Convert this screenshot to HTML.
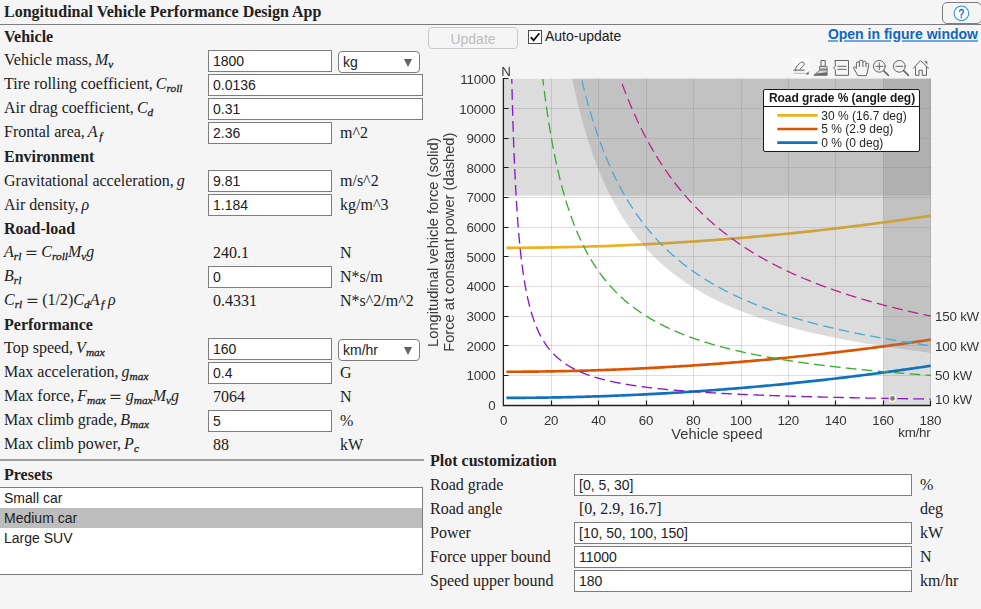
<!DOCTYPE html>
<html lang="en"><head><meta charset="utf-8"><title>Longitudinal Vehicle Performance Design App</title>
<style>
html,body{margin:0;padding:0}
body{width:981px;height:609px;background:#f5f5f5;position:relative;overflow:hidden;font-family:"Liberation Serif",serif;font-size:16px;color:#212121}
.abs,.sec,.lbl,.inp,.val,.unit,.sel{position:absolute;white-space:nowrap;box-sizing:border-box}
.sec,.lbl,.val,.unit{height:24px;line-height:24px}
.sec{font-weight:bold}
.inp{height:22px;border:1px solid #7d7d7d;background:#fff;padding:0 0 0 4px;font:14px/20px "Liberation Sans",sans-serif;color:#212121}
.sel{left:338px;width:82px;height:22px;border:1px solid #7d7d7d;border-radius:4px;background:#fff;padding:0 0 0 4px;font:14px/20px "Liberation Sans",sans-serif}
.arr{position:absolute;right:7px;top:7px;width:0;height:0;border-left:4.5px solid transparent;border-right:4.5px solid transparent;border-top:8px solid #616161}
i.m{font-style:italic}
i.m sub{font-size:11.3px;-webkit-text-stroke:0.3px #212121;vertical-align:baseline;position:relative;top:3px;line-height:0}
.eq{display:inline-block;transform:scaleX(1.25);margin:0 1.5px;position:relative;top:2px;-webkit-text-stroke:0.3px #212121}
.hdr{left:0;top:0;width:981px;height:25px;border-bottom:1px solid #7d7d7d;line-height:24px}
.title{left:4px;top:0;height:24px;line-height:24px;font-weight:bold}
.help{left:942px;top:2px;width:40px;height:22px;border:1px solid #7d7d7d;border-radius:5px;background:#f5f5f5}
.btn{left:428px;top:27px;width:90px;height:22px;border:1px solid #c9c9c9;border-radius:4px;background:#f5f5f5;color:#bdbdbd;font:14px/22px "Liberation Sans",sans-serif;text-align:center}
.cb{left:528px;top:30px;width:14px;height:14px;border:1px solid #4d4d4d;background:#fff}
.cbl{left:545px;top:25px;height:22px;line-height:22px;font:14px/22px "Liberation Sans",sans-serif;color:#212121}
.link{right:3px;top:23px;font:bold 14px/22px "Liberation Sans",sans-serif;color:#1265c0;text-decoration:underline;text-decoration-color:#6ea8de;text-underline-offset:1px;text-decoration-thickness:2px}
.hr{left:0;top:459px;width:424px;height:2px;background:#9e9e9e}
.list{left:-1px;top:487px;width:424px;height:88px;border:1px solid #7d7d7d;background:#fff;font:14px/20px "Liberation Sans",sans-serif}
.list div{height:20px;padding-left:4px}
.list .on{background:#bdbdbd}
svg.plot{position:absolute;left:424px;top:52px;will-change:transform}
</style></head><body>
<div class="abs hdr"></div>
<div class="abs title">Longitudinal Vehicle Performance Design App</div>
<div class="abs help"><svg width="38" height="20" viewBox="0 0 38 20" style="position:absolute;left:0;top:0"><circle cx="18.4" cy="10.3" r="7.3" fill="#fff" stroke="#2f8fe8" stroke-width="1.1"/><text x="18.4" y="14.6" transform="translate(18.5 0) scale(0.78 1) translate(-18.5 0)" text-anchor="middle" font-family="Liberation Sans, sans-serif" font-size="13" fill="#1a5fb4" stroke="#1a5fb4" stroke-width="0.35">?</text></svg></div>
<div class="abs btn">Update</div>
<div class="abs cb"><svg width="12" height="12" viewBox="0 0 12 12" style="position:absolute;left:0;top:0"><path d="M1.8,6.2 L4.6,9.4 L10.4,2.2" fill="none" stroke="#111" stroke-width="1.8"/></svg></div>
<div class="abs cbl">Auto-update</div>
<div class="abs link">Open in figure window</div>
<div class="abs hr"></div>
<div class="abs list"><div>Small car</div><div class="on">Medium car</div><div>Large SUV</div></div>
<div class="sec" style="left:4px;top:25px">Vehicle</div>
<div class="lbl" style="left:4px;top:48px">Vehicle mass, <i class="m" style="margin-left:-1px">M<sub>v</sub></i></div>
<div class="inp" style="left:208px;top:50px;width:124px">1800</div>
<div class="sel" style="top:51px">kg<span class="arr"></span></div>
<div class="lbl" style="left:4px;top:72px">Tire rolling coefficient, <i class="m" style="margin-left:-1px">C<sub>roll</sub></i></div>
<div class="inp" style="left:208px;top:74px;width:215px">0.0136</div>
<div class="lbl" style="left:4px;top:96px">Air drag coefficient, <i class="m" style="margin-left:-1px">C<sub>d</sub></i></div>
<div class="inp" style="left:208px;top:98px;width:215px">0.31</div>
<div class="lbl" style="left:4px;top:120px">Frontal area, <i class="m" style="margin-left:-1px">A<sub style="margin:0 4px 0 1.5px">f</sub></i></div>
<div class="inp" style="left:208px;top:122px;width:124px">2.36</div>
<div class="unit" style="left:340px;top:121px">m^2</div>
<div class="sec" style="left:4px;top:145px">Environment</div>
<div class="lbl" style="left:4px;top:169px">Gravitational acceleration, <i class="m" style="margin-left:-1px">g</i></div>
<div class="inp" style="left:208px;top:170px;width:124px">9.81</div>
<div class="unit" style="left:340px;top:169px">m/s^2</div>
<div class="lbl" style="left:4px;top:193px">Air density, <i class="m" style="margin-left:-1px">ρ</i></div>
<div class="inp" style="left:208px;top:194px;width:124px">1.184</div>
<div class="unit" style="left:340px;top:193px">kg/m^3</div>
<div class="sec" style="left:4px;top:217px">Road-load</div>
<div class="lbl" style="left:4px;top:240px"><i class="m">A<sub>rl</sub></i> <span class="eq">=</span> <i class="m">C<sub>roll</sub></i><i class="m">M<sub>v</sub></i><i class="m">g</i></div>
<div class="val" style="left:213px;top:241px">240.1</div>
<div class="unit" style="left:340px;top:241px">N</div>
<div class="lbl" style="left:4px;top:264px"><i class="m">B<sub>rl</sub></i></div>
<div class="inp" style="left:208px;top:266px;width:124px">0</div>
<div class="unit" style="left:340px;top:265px">N*s/m</div>
<div class="lbl" style="left:4px;top:288px"><i class="m">C<sub>rl</sub></i> <span class="eq">=</span> (1/2)<i class="m">C<sub>d</sub></i><i class="m">A<sub style="margin:0 4px 0 1.5px">f</sub></i><i class="m">ρ</i></div>
<div class="val" style="left:213px;top:289px">0.4331</div>
<div class="unit" style="left:340px;top:289px">N*s^2/m^2</div>
<div class="sec" style="left:4px;top:313px">Performance</div>
<div class="lbl" style="left:4px;top:336px">Top speed, <i class="m" style="margin-left:-1px">V<sub>max</sub></i></div>
<div class="inp" style="left:208px;top:338px;width:124px">160</div>
<div class="sel" style="top:339px">km/hr<span class="arr"></span></div>
<div class="lbl" style="left:4px;top:360px">Max acceleration, <i class="m" style="margin-left:-1px">g<sub>max</sub></i></div>
<div class="inp" style="left:208px;top:362px;width:124px">0.4</div>
<div class="unit" style="left:340px;top:361px">G</div>
<div class="lbl" style="left:4px;top:384px">Max force, <i class="m" style="margin-left:-1px">F<sub>max</sub></i> <span class="eq">=</span> <i class="m">g<sub>max</sub></i><i class="m">M<sub>v</sub></i><i class="m">g</i></div>
<div class="val" style="left:213px;top:385px">7064</div>
<div class="unit" style="left:340px;top:385px">N</div>
<div class="lbl" style="left:4px;top:408px">Max climb grade, <i class="m" style="margin-left:-1px">B<sub>max</sub></i></div>
<div class="inp" style="left:208px;top:410px;width:124px">5</div>
<div class="unit" style="left:340px;top:409px">%</div>
<div class="lbl" style="left:4px;top:432px">Max climb power, <i class="m" style="margin-left:-1px">P<sub>c</sub></i></div>
<div class="val" style="left:213px;top:433px">88</div>
<div class="unit" style="left:340px;top:433px">kW</div>
<div class="sec" style="left:4px;top:463px">Presets</div>
<div class="sec" style="left:430px;top:449px">Plot customization</div>
<div class="lbl" style="left:430px;top:473px">Road grade</div>
<div class="inp" style="left:574px;top:474px;width:338px">[0, 5, 30]</div>
<div class="unit" style="left:920px;top:473px">%</div>
<div class="lbl" style="left:430px;top:497px">Road angle</div>
<div class="val" style="left:579px;top:497px">[0, 2.9, 16.7]</div>
<div class="unit" style="left:920px;top:497px">deg</div>
<div class="lbl" style="left:430px;top:521px">Power</div>
<div class="inp" style="left:574px;top:522px;width:338px">[10, 50, 100, 150]</div>
<div class="unit" style="left:920px;top:521px">kW</div>
<div class="lbl" style="left:430px;top:545px">Force upper bound</div>
<div class="inp" style="left:574px;top:546px;width:338px">11000</div>
<div class="unit" style="left:920px;top:545px">N</div>
<div class="lbl" style="left:430px;top:569px">Speed upper bound</div>
<div class="inp" style="left:574px;top:570px;width:338px">180</div>
<div class="unit" style="left:920px;top:569px">km/hr</div>
<svg class="plot" width="557" height="394" viewBox="424 52 557 394">
<defs><clipPath id="ax"><rect x="504" y="78.5" width="427" height="326.5"/></clipPath></defs>
<rect x="504" y="78.5" width="427" height="326.5" fill="#fff"/>
<path d="M551.5,78.5 V405 M598.5,78.5 V405 M646.5,78.5 V405 M693.5,78.5 V405 M741.5,78.5 V405 M788.5,78.5 V405 M835.5,78.5 V405 M883.5,78.5 V405 M930.5,78.5 V405 M504,375.5 H931 M504,345.5 H931 M504,316.5 H931 M504,286.5 H931 M504,256.5 H931 M504,227.5 H931 M504,197.5 H931 M504,167.5 H931 M504,138.5 H931 M504,108.5 H931" stroke="#262626" stroke-opacity="0.15" stroke-width="1" fill="none"/>
<g clip-path="url(#ax)">
<rect x="504" y="78.5" width="427" height="117.15" fill="#808080" fill-opacity="0.28"/>
<rect x="883.29" y="78.5" width="47.71" height="326.5" fill="#808080" fill-opacity="0.28"/>
<path d="M506.37,397.88 L508.74,397.88 L511.11,397.87 L513.48,397.87 L515.85,397.86 L518.22,397.85 L520.59,397.83 L522.96,397.82 L525.34,397.80 L527.71,397.78 L530.08,397.76 L532.45,397.74 L534.82,397.72 L537.19,397.69 L539.56,397.66 L541.93,397.63 L544.30,397.60 L546.67,397.56 L549.04,397.53 L551.41,397.49 L553.78,397.45 L556.15,397.40 L558.52,397.36 L560.89,397.31 L563.26,397.26 L565.63,397.21 L568.00,397.16 L570.38,397.11 L572.75,397.05 L575.12,396.99 L577.49,396.93 L579.86,396.87 L582.23,396.80 L584.60,396.74 L586.97,396.67 L589.34,396.60 L591.71,396.53 L594.08,396.45 L596.45,396.38 L598.82,396.30 L601.19,396.22 L603.56,396.14 L605.93,396.05 L608.30,395.97 L610.68,395.88 L613.05,395.79 L615.42,395.70 L617.79,395.60 L620.16,395.50 L622.53,395.41 L624.90,395.31 L627.27,395.20 L629.64,395.10 L632.01,394.99 L634.38,394.89 L636.75,394.78 L639.12,394.67 L641.49,394.55 L643.86,394.44 L646.23,394.32 L648.60,394.20 L650.97,394.08 L653.35,393.95 L655.72,393.83 L658.09,393.70 L660.46,393.57 L662.83,393.44 L665.20,393.30 L667.57,393.17 L669.94,393.03 L672.31,392.89 L674.68,392.75 L677.05,392.60 L679.42,392.46 L681.79,392.31 L684.16,392.16 L686.53,392.01 L688.90,391.86 L691.27,391.70 L693.64,391.54 L696.01,391.38 L698.39,391.22 L700.76,391.06 L703.13,390.89 L705.50,390.73 L707.87,390.56 L710.24,390.39 L712.61,390.21 L714.98,390.04 L717.35,389.86 L719.72,389.68 L722.09,389.50 L724.46,389.32 L726.83,389.13 L729.20,388.94 L731.57,388.76 L733.94,388.56 L736.31,388.37 L738.68,388.18 L741.06,387.98 L743.43,387.78 L745.80,387.58 L748.17,387.38 L750.54,387.17 L752.91,386.96 L755.28,386.75 L757.65,386.54 L760.02,386.33 L762.39,386.12 L764.76,385.90 L767.13,385.68 L769.50,385.46 L771.87,385.24 L774.24,385.01 L776.61,384.78 L778.98,384.56 L781.36,384.33 L783.73,384.09 L786.10,383.86 L788.47,383.62 L790.84,383.38 L793.21,383.14 L795.58,382.90 L797.95,382.65 L800.32,382.41 L802.69,382.16 L805.06,381.91 L807.43,381.66 L809.80,381.40 L812.17,381.14 L814.54,380.89 L816.91,380.63 L819.28,380.36 L821.65,380.10 L824.03,379.83 L826.40,379.56 L828.77,379.29 L831.14,379.02 L833.51,378.75 L835.88,378.47 L838.25,378.19 L840.62,377.91 L842.99,377.63 L845.36,377.35 L847.73,377.06 L850.10,376.77 L852.47,376.48 L854.84,376.19 L857.21,375.89 L859.58,375.60 L861.95,375.30 L864.32,375.00 L866.70,374.70 L869.07,374.39 L871.44,374.09 L873.81,373.78 L876.18,373.47 L878.55,373.16 L880.92,372.84 L883.29,372.53 L885.66,372.21 L888.03,371.89 L890.40,371.57 L892.77,371.24 L895.14,370.92 L897.51,370.59 L899.88,370.26 L902.25,369.93 L904.62,369.60 L906.99,369.26 L909.37,368.92 L911.74,368.58 L914.11,368.24 L916.48,367.90 L918.85,367.55 L921.22,367.20 L923.59,366.85 L925.96,366.50 L928.33,366.15 L930.70,365.79" stroke="#1171BE" stroke-width="2.67" fill="none" stroke-linejoin="round"/>
<path d="M506.37,371.76 L508.74,371.75 L511.11,371.75 L513.48,371.74 L515.85,371.73 L518.22,371.72 L520.59,371.71 L522.96,371.70 L525.34,371.68 L527.71,371.66 L530.08,371.64 L532.45,371.62 L534.82,371.59 L537.19,371.56 L539.56,371.54 L541.93,371.50 L544.30,371.47 L546.67,371.44 L549.04,371.40 L551.41,371.36 L553.78,371.32 L556.15,371.28 L558.52,371.23 L560.89,371.19 L563.26,371.14 L565.63,371.09 L568.00,371.04 L570.38,370.98 L572.75,370.93 L575.12,370.87 L577.49,370.81 L579.86,370.74 L582.23,370.68 L584.60,370.61 L586.97,370.55 L589.34,370.47 L591.71,370.40 L594.08,370.33 L596.45,370.25 L598.82,370.17 L601.19,370.09 L603.56,370.01 L605.93,369.93 L608.30,369.84 L610.68,369.75 L613.05,369.66 L615.42,369.57 L617.79,369.48 L620.16,369.38 L622.53,369.28 L624.90,369.18 L627.27,369.08 L629.64,368.98 L632.01,368.87 L634.38,368.76 L636.75,368.65 L639.12,368.54 L641.49,368.43 L643.86,368.31 L646.23,368.19 L648.60,368.07 L650.97,367.95 L653.35,367.83 L655.72,367.70 L658.09,367.57 L660.46,367.44 L662.83,367.31 L665.20,367.18 L667.57,367.04 L669.94,366.91 L672.31,366.77 L674.68,366.62 L677.05,366.48 L679.42,366.33 L681.79,366.19 L684.16,366.04 L686.53,365.89 L688.90,365.73 L691.27,365.58 L693.64,365.42 L696.01,365.26 L698.39,365.10 L700.76,364.94 L703.13,364.77 L705.50,364.60 L707.87,364.43 L710.24,364.26 L712.61,364.09 L714.98,363.91 L717.35,363.74 L719.72,363.56 L722.09,363.38 L724.46,363.19 L726.83,363.01 L729.20,362.82 L731.57,362.63 L733.94,362.44 L736.31,362.25 L738.68,362.05 L741.06,361.85 L743.43,361.66 L745.80,361.45 L748.17,361.25 L750.54,361.05 L752.91,360.84 L755.28,360.63 L757.65,360.42 L760.02,360.21 L762.39,359.99 L764.76,359.77 L767.13,359.56 L769.50,359.33 L771.87,359.11 L774.24,358.89 L776.61,358.66 L778.98,358.43 L781.36,358.20 L783.73,357.97 L786.10,357.73 L788.47,357.50 L790.84,357.26 L793.21,357.02 L795.58,356.77 L797.95,356.53 L800.32,356.28 L802.69,356.03 L805.06,355.78 L807.43,355.53 L809.80,355.28 L812.17,355.02 L814.54,354.76 L816.91,354.50 L819.28,354.24 L821.65,353.97 L824.03,353.71 L826.40,353.44 L828.77,353.17 L831.14,352.90 L833.51,352.62 L835.88,352.35 L838.25,352.07 L840.62,351.79 L842.99,351.51 L845.36,351.22 L847.73,350.94 L850.10,350.65 L852.47,350.36 L854.84,350.06 L857.21,349.77 L859.58,349.47 L861.95,349.18 L864.32,348.88 L866.70,348.57 L869.07,348.27 L871.44,347.96 L873.81,347.66 L876.18,347.35 L878.55,347.03 L880.92,346.72 L883.29,346.40 L885.66,346.09 L888.03,345.77 L890.40,345.44 L892.77,345.12 L895.14,344.79 L897.51,344.47 L899.88,344.14 L902.25,343.81 L904.62,343.47 L906.99,343.14 L909.37,342.80 L911.74,342.46 L914.11,342.12 L916.48,341.77 L918.85,341.43 L921.22,341.08 L923.59,340.73 L925.96,340.38 L928.33,340.02 L930.70,339.67" stroke="#DD5400" stroke-width="2.67" fill="none" stroke-linejoin="round"/>
<path d="M506.37,247.81 L508.74,247.80 L511.11,247.80 L513.48,247.79 L515.85,247.78 L518.22,247.77 L520.59,247.76 L522.96,247.75 L525.34,247.73 L527.71,247.71 L530.08,247.69 L532.45,247.67 L534.82,247.64 L537.19,247.61 L539.56,247.59 L541.93,247.55 L544.30,247.52 L546.67,247.49 L549.04,247.45 L551.41,247.41 L553.78,247.37 L556.15,247.33 L558.52,247.28 L560.89,247.24 L563.26,247.19 L565.63,247.14 L568.00,247.09 L570.38,247.03 L572.75,246.98 L575.12,246.92 L577.49,246.86 L579.86,246.79 L582.23,246.73 L584.60,246.66 L586.97,246.60 L589.34,246.52 L591.71,246.45 L594.08,246.38 L596.45,246.30 L598.82,246.22 L601.19,246.14 L603.56,246.06 L605.93,245.98 L608.30,245.89 L610.68,245.80 L613.05,245.71 L615.42,245.62 L617.79,245.53 L620.16,245.43 L622.53,245.33 L624.90,245.23 L627.27,245.13 L629.64,245.03 L632.01,244.92 L634.38,244.81 L636.75,244.70 L639.12,244.59 L641.49,244.48 L643.86,244.36 L646.23,244.24 L648.60,244.12 L650.97,244.00 L653.35,243.88 L655.72,243.75 L658.09,243.62 L660.46,243.49 L662.83,243.36 L665.20,243.23 L667.57,243.09 L669.94,242.96 L672.31,242.82 L674.68,242.67 L677.05,242.53 L679.42,242.38 L681.79,242.24 L684.16,242.09 L686.53,241.94 L688.90,241.78 L691.27,241.63 L693.64,241.47 L696.01,241.31 L698.39,241.15 L700.76,240.99 L703.13,240.82 L705.50,240.65 L707.87,240.48 L710.24,240.31 L712.61,240.14 L714.98,239.96 L717.35,239.79 L719.72,239.61 L722.09,239.43 L724.46,239.24 L726.83,239.06 L729.20,238.87 L731.57,238.68 L733.94,238.49 L736.31,238.30 L738.68,238.10 L741.06,237.90 L743.43,237.71 L745.80,237.50 L748.17,237.30 L750.54,237.10 L752.91,236.89 L755.28,236.68 L757.65,236.47 L760.02,236.26 L762.39,236.04 L764.76,235.82 L767.13,235.61 L769.50,235.38 L771.87,235.16 L774.24,234.94 L776.61,234.71 L778.98,234.48 L781.36,234.25 L783.73,234.02 L786.10,233.78 L788.47,233.55 L790.84,233.31 L793.21,233.07 L795.58,232.82 L797.95,232.58 L800.32,232.33 L802.69,232.08 L805.06,231.83 L807.43,231.58 L809.80,231.33 L812.17,231.07 L814.54,230.81 L816.91,230.55 L819.28,230.29 L821.65,230.02 L824.03,229.76 L826.40,229.49 L828.77,229.22 L831.14,228.95 L833.51,228.67 L835.88,228.40 L838.25,228.12 L840.62,227.84 L842.99,227.56 L845.36,227.27 L847.73,226.99 L850.10,226.70 L852.47,226.41 L854.84,226.11 L857.21,225.82 L859.58,225.52 L861.95,225.23 L864.32,224.93 L866.70,224.62 L869.07,224.32 L871.44,224.01 L873.81,223.71 L876.18,223.40 L878.55,223.08 L880.92,222.77 L883.29,222.45 L885.66,222.14 L888.03,221.82 L890.40,221.49 L892.77,221.17 L895.14,220.84 L897.51,220.52 L899.88,220.19 L902.25,219.86 L904.62,219.52 L906.99,219.19 L909.37,218.85 L911.74,218.51 L914.11,218.17 L916.48,217.82 L918.85,217.48 L921.22,217.13 L923.59,216.78 L925.96,216.43 L928.33,216.07 L930.70,215.72" stroke="#EDB120" stroke-width="2.67" fill="none" stroke-linejoin="round"/>
<path d="M511.76,79.00 L512.30,100.17 L512.89,120.49 L513.48,138.27 L514.07,153.96 L514.67,167.91 L515.26,180.39 L515.85,191.62 L516.45,201.78 L517.04,211.02 L517.63,219.45 L518.22,227.18 L518.82,234.29 L519.41,240.86 L520.00,246.94 L520.59,252.58 L521.19,257.84 L521.78,262.75 L522.37,267.33 L522.96,271.64 L523.56,275.68 L524.15,279.48 L524.74,283.07 L525.34,286.45 L525.93,289.66 L526.52,292.69 L527.11,295.57 L527.71,298.31 L528.30,300.91 L528.89,303.39 L529.48,305.75 L530.08,308.01 L530.67,310.16 L531.26,312.23 L531.85,314.20 L532.45,316.09 L533.04,317.91 L533.63,319.65 L534.22,321.32 L534.82,322.93 L535.41,324.48 L536.00,325.97 L536.60,327.41 L537.19,328.79 L537.78,330.13 L538.37,331.42 L538.97,332.67 L539.56,333.87 L540.15,335.04 L540.74,336.17 L541.34,337.26 L541.93,338.32 L542.52,339.34 L543.11,340.34 L543.71,341.30 L544.30,342.24 L544.89,343.15 L545.48,344.03 L546.08,344.89 L546.67,345.73 L547.26,346.54 L547.86,347.33 L548.45,348.10 L549.04,348.85 L549.63,349.58 L550.23,350.29 L550.82,350.98 L551.41,351.65 L552.00,352.31 L552.60,352.96 L553.19,353.58 L553.78,354.19 L554.37,354.79 L554.97,355.38 L555.56,355.95 L556.15,356.50 L556.74,357.05 L557.34,357.58 L557.93,358.10 L558.52,358.61 L559.12,359.11 L559.71,359.60 L560.30,360.08 L560.89,360.55 L561.49,361.00 L562.08,361.45 L562.67,361.89 L563.26,362.32 L563.86,362.75 L564.45,363.16 L565.04,363.57 L565.63,363.97 L566.23,364.36 L566.82,364.74 L567.41,365.12 L568.00,365.48 L568.60,365.85 L569.19,366.20 L569.78,366.55 L570.38,366.90 L570.97,367.23 L571.56,367.56 L572.15,367.89 L572.75,368.21 L573.34,368.52 L573.93,368.83 L574.52,369.14 L575.12,369.44 L575.71,369.73 L576.30,370.02 L576.89,370.30 L577.49,370.58 L578.08,370.86 L578.67,371.13 L579.27,371.40 L579.86,371.66 L580.45,371.92 L581.04,372.17 L581.64,372.42 L582.23,372.67 L582.82,372.91 L583.41,373.15 L584.01,373.39 L584.60,373.62 L585.19,373.85 L585.78,374.08 L586.38,374.30 L586.97,374.52 L587.56,374.73 L588.15,374.95 L588.75,375.16 L589.34,375.36 L589.93,375.57 L590.53,375.77 L591.12,375.97 L591.71,376.16 L592.30,376.36 L592.90,376.55 L593.49,376.74 L594.08,376.92 L594.67,377.11 L595.27,377.29 L595.86,377.47 L596.45,377.64 L597.04,377.82 L597.64,377.99 L598.23,378.16 L598.82,378.33 L599.41,378.49 L600.01,378.66 L600.60,378.82 L601.19,378.98 L601.79,379.14 L602.38,379.29 L602.97,379.45 L603.56,379.60 L604.16,379.75 L604.75,379.90 L605.34,380.04 L605.93,380.19 L606.53,380.33 L607.12,380.47 L607.71,380.61 L608.30,380.75 L608.90,380.89 L609.49,381.02 L610.08,381.16 L610.68,381.29 L611.27,381.42 L611.86,381.55 L612.45,381.68 L613.05,381.81 L613.64,381.93 L614.23,382.06 L614.82,382.18 L615.42,382.30 L616.01,382.42 L616.60,382.54 L617.19,382.66 L617.79,382.77 L618.38,382.89 L618.97,383.00 L619.56,383.11 L620.16,383.23 L620.75,383.34 L621.34,383.45 L621.94,383.55 L622.53,383.66 L623.12,383.77 L623.71,383.87 L624.31,383.98 L624.90,384.08 L625.49,384.18 L626.08,384.28 L626.68,384.38 L627.27,384.48 L627.86,384.58 L628.45,384.68 L629.05,384.77 L629.64,384.87 L630.23,384.96 L630.82,385.06 L631.42,385.15 L632.01,385.24 L632.60,385.33 L633.20,385.42 L633.79,385.51 L634.38,385.60 L634.97,385.69 L635.57,385.78 L636.16,385.86 L636.75,385.95 L637.34,386.03 L637.94,386.12 L638.53,386.20 L639.12,386.28 L639.71,386.36 L640.31,386.45 L640.90,386.53 L641.49,386.61 L642.08,386.68 L642.68,386.76 L643.27,386.84 L643.86,386.92 L644.46,386.99 L645.05,387.07 L645.64,387.14 L646.23,387.22 L646.83,387.29 L647.42,387.37 L648.01,387.44 L648.60,387.51 L649.20,387.58 L649.79,387.65 L650.38,387.72 L650.97,387.79 L651.57,387.86 L652.16,387.93 L652.75,388.00 L653.35,388.06 L653.94,388.13 L654.53,388.20 L655.12,388.26 L655.72,388.33 L656.31,388.39 L656.90,388.46 L657.49,388.52 L658.09,388.59 L658.68,388.65 L659.27,388.71 L659.86,388.77 L660.46,388.83 L661.05,388.90 L661.64,388.96 L662.23,389.02 L662.83,389.08 L663.42,389.14 L664.01,389.19 L664.61,389.25 L665.20,389.31 L665.79,389.37 L666.38,389.42 L666.98,389.48 L667.57,389.54 L668.16,389.59 L668.75,389.65 L669.35,389.70 L669.94,389.76 L670.53,389.81 L671.12,389.87 L671.72,389.92 L672.31,389.97 L672.90,390.03 L673.49,390.08 L674.09,390.13 L674.68,390.18 L675.27,390.23 L675.87,390.28 L676.46,390.33 L677.05,390.38 L677.64,390.43 L678.24,390.48 L678.83,390.53 L679.42,390.58 L680.01,390.63 L680.61,390.68 L681.20,390.73 L681.79,390.77 L682.38,390.82 L682.98,390.87 L683.57,390.92 L684.16,390.96 L684.75,391.01 L685.35,391.05 L685.94,391.10 L686.53,391.14 L687.13,391.19 L687.72,391.23 L688.31,391.28 L688.90,391.32 L689.50,391.37 L690.09,391.41 L690.68,391.45 L691.27,391.49 L691.87,391.54 L692.46,391.58 L693.05,391.62 L693.64,391.66 L694.24,391.71 L694.83,391.75 L695.42,391.79 L696.01,391.83 L696.61,391.87 L697.20,391.91 L697.79,391.95 L698.39,391.99 L698.98,392.03 L699.57,392.07 L700.16,392.11 L700.76,392.15 L701.35,392.18 L701.94,392.22 L702.53,392.26 L703.13,392.30 L703.72,392.34 L704.31,392.37 L704.90,392.41 L705.50,392.45 L706.09,392.48 L706.68,392.52 L707.28,392.56 L707.87,392.59 L708.46,392.63 L709.05,392.67 L709.65,392.70 L710.24,392.74 L710.83,392.77 L711.42,392.81 L712.02,392.84 L712.61,392.88 L713.20,392.91 L713.79,392.94 L714.39,392.98 L714.98,393.01 L715.57,393.05 L716.16,393.08 L716.76,393.11 L717.35,393.15 L717.94,393.18 L718.54,393.21 L719.13,393.24 L719.72,393.28 L720.31,393.31 L720.91,393.34 L721.50,393.37 L722.09,393.40 L722.68,393.43 L723.28,393.47 L723.87,393.50 L724.46,393.53 L725.05,393.56 L725.65,393.59 L726.24,393.62 L726.83,393.65 L727.42,393.68 L728.02,393.71 L728.61,393.74 L729.20,393.77 L729.80,393.80 L730.39,393.83 L730.98,393.86 L731.57,393.89 L732.17,393.92 L732.76,393.94 L733.35,393.97 L733.94,394.00 L734.54,394.03 L735.13,394.06 L735.72,394.09 L736.31,394.11 L736.91,394.14 L737.50,394.17 L738.09,394.20 L738.68,394.22 L739.28,394.25 L739.87,394.28 L740.46,394.30 L741.06,394.33 L741.65,394.36 L742.24,394.38 L742.83,394.41 L743.43,394.44 L744.02,394.46 L744.61,394.49 L745.20,394.51 L745.80,394.54 L746.39,394.57 L746.98,394.59 L747.57,394.62 L748.17,394.64 L748.76,394.67 L749.35,394.69 L749.95,394.72 L750.54,394.74 L751.13,394.77 L751.72,394.79 L752.32,394.81 L752.91,394.84 L753.50,394.86 L754.09,394.89 L754.69,394.91 L755.28,394.93 L755.87,394.96 L756.46,394.98 L757.06,395.01 L757.65,395.03 L758.24,395.05 L758.83,395.08 L759.43,395.10 L760.02,395.12 L760.61,395.14 L761.21,395.17 L761.80,395.19 L762.39,395.21 L762.98,395.23 L763.58,395.26 L764.17,395.28 L764.76,395.30 L765.35,395.32 L765.95,395.34 L766.54,395.37 L767.13,395.39 L767.72,395.41 L768.32,395.43 L768.91,395.45 L769.50,395.47 L770.09,395.50 L770.69,395.52 L771.28,395.54 L771.87,395.56 L772.47,395.58 L773.06,395.60 L773.65,395.62 L774.24,395.64 L774.84,395.66 L775.43,395.68 L776.02,395.70 L776.61,395.72 L777.21,395.74 L777.80,395.76 L778.39,395.78 L778.98,395.80 L779.58,395.82 L780.17,395.84 L780.76,395.86 L781.36,395.88 L781.95,395.90 L782.54,395.92 L783.13,395.94 L783.73,395.96 L784.32,395.98 L784.91,396.00 L785.50,396.02 L786.10,396.03 L786.69,396.05 L787.28,396.07 L787.87,396.09 L788.47,396.11 L789.06,396.13 L789.65,396.15 L790.24,396.16 L790.84,396.18 L791.43,396.20 L792.02,396.22 L792.62,396.24 L793.21,396.25 L793.80,396.27 L794.39,396.29 L794.99,396.31 L795.58,396.33 L796.17,396.34 L796.76,396.36 L797.36,396.38 L797.95,396.40 L798.54,396.41 L799.13,396.43 L799.73,396.45 L800.32,396.46 L800.91,396.48 L801.50,396.50 L802.10,396.52 L802.69,396.53 L803.28,396.55 L803.88,396.57 L804.47,396.58 L805.06,396.60 L805.65,396.62 L806.25,396.63 L806.84,396.65 L807.43,396.66 L808.02,396.68 L808.62,396.70 L809.21,396.71 L809.80,396.73 L810.39,396.75 L810.99,396.76 L811.58,396.78 L812.17,396.79 L812.76,396.81 L813.36,396.82 L813.95,396.84 L814.54,396.86 L815.14,396.87 L815.73,396.89 L816.32,396.90 L816.91,396.92 L817.51,396.93 L818.10,396.95 L818.69,396.96 L819.28,396.98 L819.88,396.99 L820.47,397.01 L821.06,397.02 L821.65,397.04 L822.25,397.05 L822.84,397.07 L823.43,397.08 L824.03,397.10 L824.62,397.11 L825.21,397.13 L825.80,397.14 L826.40,397.16 L826.99,397.17 L827.58,397.18 L828.17,397.20 L828.77,397.21 L829.36,397.23 L829.95,397.24 L830.54,397.25 L831.14,397.27 L831.73,397.28 L832.32,397.30 L832.91,397.31 L833.51,397.32 L834.10,397.34 L834.69,397.35 L835.29,397.37 L835.88,397.38 L836.47,397.39 L837.06,397.41 L837.66,397.42 L838.25,397.43 L838.84,397.45 L839.43,397.46 L840.03,397.47 L840.62,397.49 L841.21,397.50 L841.80,397.51 L842.40,397.53 L842.99,397.54 L843.58,397.55 L844.17,397.57 L844.77,397.58 L845.36,397.59 L845.95,397.60 L846.55,397.62 L847.14,397.63 L847.73,397.64 L848.32,397.65 L848.92,397.67 L849.51,397.68 L850.10,397.69 L850.69,397.70 L851.29,397.72 L851.88,397.73 L852.47,397.74 L853.06,397.75 L853.66,397.77 L854.25,397.78 L854.84,397.79 L855.43,397.80 L856.03,397.82 L856.62,397.83 L857.21,397.84 L857.81,397.85 L858.40,397.86 L858.99,397.88 L859.58,397.89 L860.18,397.90 L860.77,397.91 L861.36,397.92 L861.95,397.93 L862.55,397.95 L863.14,397.96 L863.73,397.97 L864.32,397.98 L864.92,397.99 L865.51,398.00 L866.10,398.02 L866.70,398.03 L867.29,398.04 L867.88,398.05 L868.47,398.06 L869.07,398.07 L869.66,398.08 L870.25,398.09 L870.84,398.11 L871.44,398.12 L872.03,398.13 L872.62,398.14 L873.21,398.15 L873.81,398.16 L874.40,398.17 L874.99,398.18 L875.58,398.19 L876.18,398.20 L876.77,398.22 L877.36,398.23 L877.96,398.24 L878.55,398.25 L879.14,398.26 L879.73,398.27 L880.33,398.28 L880.92,398.29 L881.51,398.30 L882.10,398.31 L882.70,398.32 L883.29,398.33 L883.88,398.34 L884.47,398.35 L885.07,398.36 L885.66,398.37 L886.25,398.38 L886.84,398.39 L887.44,398.40 L888.03,398.41 L888.62,398.42 L889.22,398.43 L889.81,398.44 L890.40,398.45 L890.99,398.46 L891.59,398.47 L892.18,398.48 L892.77,398.49 L893.36,398.50 L893.96,398.51 L894.55,398.52 L895.14,398.53 L895.73,398.54 L896.33,398.55 L896.92,398.56 L897.51,398.57 L898.10,398.58 L898.70,398.59 L899.29,398.60 L899.88,398.61 L900.48,398.62 L901.07,398.63 L901.66,398.64 L902.25,398.65 L902.85,398.66 L903.44,398.67 L904.03,398.68 L904.62,398.69 L905.22,398.70 L905.81,398.71 L906.40,398.71 L906.99,398.72 L907.59,398.73 L908.18,398.74 L908.77,398.75 L909.37,398.76 L909.96,398.77 L910.55,398.78 L911.14,398.79 L911.74,398.80 L912.33,398.81 L912.92,398.82 L913.51,398.82 L914.11,398.83 L914.70,398.84 L915.29,398.85 L915.88,398.86 L916.48,398.87 L917.07,398.88 L917.66,398.89 L918.25,398.89 L918.85,398.90 L919.44,398.91 L920.03,398.92 L920.63,398.93 L921.22,398.94 L921.81,398.95 L922.40,398.96 L923.00,398.96 L923.59,398.97 L924.18,398.98 L924.77,398.99 L925.37,399.00 L925.96,399.01 L926.55,399.01 L927.14,399.02 L927.74,399.03 L928.33,399.04 L928.92,399.05 L929.51,399.06 L930.11,399.06 L930.70,399.07" stroke="#8516D1" stroke-width="1.33" fill="none" stroke-dasharray="10.67 5.33" stroke-dashoffset="6"/>
<path d="M542.79,79.00 L543.11,81.69 L543.71,86.52 L544.30,91.20 L544.89,95.75 L545.48,100.17 L546.08,104.46 L546.67,108.64 L547.26,112.70 L547.86,116.65 L548.45,120.49 L549.04,124.23 L549.63,127.88 L550.23,131.43 L550.82,134.90 L551.41,138.27 L552.00,141.57 L552.60,144.78 L553.19,147.91 L553.78,150.97 L554.37,153.96 L554.97,156.88 L555.56,159.73 L556.15,162.52 L556.74,165.25 L557.34,167.91 L557.93,170.51 L558.52,173.06 L559.12,175.56 L559.71,178.00 L560.30,180.39 L560.89,182.73 L561.49,185.02 L562.08,187.26 L562.67,189.46 L563.26,191.62 L563.86,193.73 L564.45,195.80 L565.04,197.83 L565.63,199.83 L566.23,201.78 L566.82,203.70 L567.41,205.58 L568.00,207.42 L568.60,209.24 L569.19,211.02 L569.78,212.76 L570.38,214.48 L570.97,216.17 L571.56,217.82 L572.15,219.45 L572.75,221.05 L573.34,222.62 L573.93,224.17 L574.52,225.69 L575.12,227.18 L575.71,228.65 L576.30,230.10 L576.89,231.52 L577.49,232.92 L578.08,234.29 L578.67,235.65 L579.27,236.98 L579.86,238.30 L580.45,239.59 L581.04,240.86 L581.64,242.11 L582.23,243.35 L582.82,244.56 L583.41,245.76 L584.01,246.94 L584.60,248.10 L585.19,249.25 L585.78,250.38 L586.38,251.49 L586.97,252.58 L587.56,253.67 L588.15,254.73 L588.75,255.78 L589.34,256.82 L589.93,257.84 L590.53,258.85 L591.12,259.84 L591.71,260.82 L592.30,261.79 L592.90,262.75 L593.49,263.69 L594.08,264.62 L594.67,265.53 L595.27,266.44 L595.86,267.33 L596.45,268.22 L597.04,269.09 L597.64,269.95 L598.23,270.80 L598.82,271.64 L599.41,272.46 L600.01,273.28 L600.60,274.09 L601.19,274.89 L601.79,275.68 L602.38,276.46 L602.97,277.23 L603.56,277.99 L604.16,278.74 L604.75,279.48 L605.34,280.22 L605.93,280.94 L606.53,281.66 L607.12,282.37 L607.71,283.07 L608.30,283.76 L608.90,284.45 L609.49,285.12 L610.08,285.79 L610.68,286.45 L611.27,287.11 L611.86,287.76 L612.45,288.40 L613.05,289.03 L613.64,289.66 L614.23,290.28 L614.82,290.89 L615.42,291.50 L616.01,292.10 L616.60,292.69 L617.19,293.28 L617.79,293.86 L618.38,294.44 L618.97,295.01 L619.56,295.57 L620.16,296.13 L620.75,296.68 L621.34,297.23 L621.94,297.77 L622.53,298.31 L623.12,298.84 L623.71,299.37 L624.31,299.89 L624.90,300.40 L625.49,300.91 L626.08,301.42 L626.68,301.92 L627.27,302.41 L627.86,302.90 L628.45,303.39 L629.05,303.87 L629.64,304.35 L630.23,304.82 L630.82,305.29 L631.42,305.75 L632.01,306.21 L632.60,306.67 L633.20,307.12 L633.79,307.57 L634.38,308.01 L634.97,308.45 L635.57,308.88 L636.16,309.31 L636.75,309.74 L637.34,310.16 L637.94,310.58 L638.53,311.00 L639.12,311.41 L639.71,311.82 L640.31,312.23 L640.90,312.63 L641.49,313.03 L642.08,313.42 L642.68,313.81 L643.27,314.20 L643.86,314.58 L644.46,314.97 L645.05,315.34 L645.64,315.72 L646.23,316.09 L646.83,316.46 L647.42,316.83 L648.01,317.19 L648.60,317.55 L649.20,317.91 L649.79,318.26 L650.38,318.61 L650.97,318.96 L651.57,319.30 L652.16,319.65 L652.75,319.99 L653.35,320.32 L653.94,320.66 L654.53,320.99 L655.12,321.32 L655.72,321.65 L656.31,321.97 L656.90,322.29 L657.49,322.61 L658.09,322.93 L658.68,323.24 L659.27,323.56 L659.86,323.87 L660.46,324.17 L661.05,324.48 L661.64,324.78 L662.23,325.08 L662.83,325.38 L663.42,325.68 L664.01,325.97 L664.61,326.26 L665.20,326.55 L665.79,326.84 L666.38,327.12 L666.98,327.41 L667.57,327.69 L668.16,327.97 L668.75,328.24 L669.35,328.52 L669.94,328.79 L670.53,329.06 L671.12,329.33 L671.72,329.60 L672.31,329.87 L672.90,330.13 L673.49,330.39 L674.09,330.65 L674.68,330.91 L675.27,331.17 L675.87,331.42 L676.46,331.67 L677.05,331.92 L677.64,332.17 L678.24,332.42 L678.83,332.67 L679.42,332.91 L680.01,333.15 L680.61,333.40 L681.20,333.63 L681.79,333.87 L682.38,334.11 L682.98,334.34 L683.57,334.58 L684.16,334.81 L684.75,335.04 L685.35,335.27 L685.94,335.49 L686.53,335.72 L687.13,335.94 L687.72,336.17 L688.31,336.39 L688.90,336.61 L689.50,336.83 L690.09,337.04 L690.68,337.26 L691.27,337.47 L691.87,337.69 L692.46,337.90 L693.05,338.11 L693.64,338.32 L694.24,338.53 L694.83,338.73 L695.42,338.94 L696.01,339.14 L696.61,339.34 L697.20,339.55 L697.79,339.75 L698.39,339.94 L698.98,340.14 L699.57,340.34 L700.16,340.53 L700.76,340.73 L701.35,340.92 L701.94,341.11 L702.53,341.30 L703.13,341.49 L703.72,341.68 L704.31,341.87 L704.90,342.06 L705.50,342.24 L706.09,342.42 L706.68,342.61 L707.28,342.79 L707.87,342.97 L708.46,343.15 L709.05,343.33 L709.65,343.51 L710.24,343.68 L710.83,343.86 L711.42,344.03 L712.02,344.21 L712.61,344.38 L713.20,344.55 L713.79,344.72 L714.39,344.89 L714.98,345.06 L715.57,345.23 L716.16,345.40 L716.76,345.56 L717.35,345.73 L717.94,345.89 L718.54,346.05 L719.13,346.22 L719.72,346.38 L720.31,346.54 L720.91,346.70 L721.50,346.86 L722.09,347.02 L722.68,347.17 L723.28,347.33 L723.87,347.48 L724.46,347.64 L725.05,347.79 L725.65,347.95 L726.24,348.10 L726.83,348.25 L727.42,348.40 L728.02,348.55 L728.61,348.70 L729.20,348.85 L729.80,348.99 L730.39,349.14 L730.98,349.29 L731.57,349.43 L732.17,349.58 L732.76,349.72 L733.35,349.86 L733.94,350.00 L734.54,350.15 L735.13,350.29 L735.72,350.43 L736.31,350.57 L736.91,350.70 L737.50,350.84 L738.09,350.98 L738.68,351.12 L739.28,351.25 L739.87,351.39 L740.46,351.52 L741.06,351.65 L741.65,351.79 L742.24,351.92 L742.83,352.05 L743.43,352.18 L744.02,352.31 L744.61,352.44 L745.20,352.57 L745.80,352.70 L746.39,352.83 L746.98,352.96 L747.57,353.08 L748.17,353.21 L748.76,353.33 L749.35,353.46 L749.95,353.58 L750.54,353.71 L751.13,353.83 L751.72,353.95 L752.32,354.07 L752.91,354.19 L753.50,354.32 L754.09,354.44 L754.69,354.56 L755.28,354.67 L755.87,354.79 L756.46,354.91 L757.06,355.03 L757.65,355.14 L758.24,355.26 L758.83,355.38 L759.43,355.49 L760.02,355.61 L760.61,355.72 L761.21,355.83 L761.80,355.95 L762.39,356.06 L762.98,356.17 L763.58,356.28 L764.17,356.39 L764.76,356.50 L765.35,356.61 L765.95,356.72 L766.54,356.83 L767.13,356.94 L767.72,357.05 L768.32,357.16 L768.91,357.26 L769.50,357.37 L770.09,357.48 L770.69,357.58 L771.28,357.69 L771.87,357.79 L772.47,357.90 L773.06,358.00 L773.65,358.10 L774.24,358.21 L774.84,358.31 L775.43,358.41 L776.02,358.51 L776.61,358.61 L777.21,358.71 L777.80,358.81 L778.39,358.91 L778.98,359.01 L779.58,359.11 L780.17,359.21 L780.76,359.31 L781.36,359.41 L781.95,359.50 L782.54,359.60 L783.13,359.70 L783.73,359.79 L784.32,359.89 L784.91,359.98 L785.50,360.08 L786.10,360.17 L786.69,360.27 L787.28,360.36 L787.87,360.45 L788.47,360.55 L789.06,360.64 L789.65,360.73 L790.24,360.82 L790.84,360.91 L791.43,361.00 L792.02,361.09 L792.62,361.18 L793.21,361.27 L793.80,361.36 L794.39,361.45 L794.99,361.54 L795.58,361.63 L796.17,361.72 L796.76,361.81 L797.36,361.89 L797.95,361.98 L798.54,362.07 L799.13,362.15 L799.73,362.24 L800.32,362.32 L800.91,362.41 L801.50,362.49 L802.10,362.58 L802.69,362.66 L803.28,362.75 L803.88,362.83 L804.47,362.91 L805.06,363.00 L805.65,363.08 L806.25,363.16 L806.84,363.24 L807.43,363.32 L808.02,363.41 L808.62,363.49 L809.21,363.57 L809.80,363.65 L810.39,363.73 L810.99,363.81 L811.58,363.89 L812.17,363.97 L812.76,364.04 L813.36,364.12 L813.95,364.20 L814.54,364.28 L815.14,364.36 L815.73,364.43 L816.32,364.51 L816.91,364.59 L817.51,364.66 L818.10,364.74 L818.69,364.82 L819.28,364.89 L819.88,364.97 L820.47,365.04 L821.06,365.12 L821.65,365.19 L822.25,365.26 L822.84,365.34 L823.43,365.41 L824.03,365.48 L824.62,365.56 L825.21,365.63 L825.80,365.70 L826.40,365.78 L826.99,365.85 L827.58,365.92 L828.17,365.99 L828.77,366.06 L829.36,366.13 L829.95,366.20 L830.54,366.27 L831.14,366.34 L831.73,366.41 L832.32,366.48 L832.91,366.55 L833.51,366.62 L834.10,366.69 L834.69,366.76 L835.29,366.83 L835.88,366.90 L836.47,366.96 L837.06,367.03 L837.66,367.10 L838.25,367.17 L838.84,367.23 L839.43,367.30 L840.03,367.37 L840.62,367.43 L841.21,367.50 L841.80,367.56 L842.40,367.63 L842.99,367.70 L843.58,367.76 L844.17,367.83 L844.77,367.89 L845.36,367.95 L845.95,368.02 L846.55,368.08 L847.14,368.15 L847.73,368.21 L848.32,368.27 L848.92,368.34 L849.51,368.40 L850.10,368.46 L850.69,368.52 L851.29,368.59 L851.88,368.65 L852.47,368.71 L853.06,368.77 L853.66,368.83 L854.25,368.89 L854.84,368.96 L855.43,369.02 L856.03,369.08 L856.62,369.14 L857.21,369.20 L857.81,369.26 L858.40,369.32 L858.99,369.38 L859.58,369.44 L860.18,369.50 L860.77,369.55 L861.36,369.61 L861.95,369.67 L862.55,369.73 L863.14,369.79 L863.73,369.85 L864.32,369.90 L864.92,369.96 L865.51,370.02 L866.10,370.08 L866.70,370.13 L867.29,370.19 L867.88,370.25 L868.47,370.30 L869.07,370.36 L869.66,370.42 L870.25,370.47 L870.84,370.53 L871.44,370.58 L872.03,370.64 L872.62,370.69 L873.21,370.75 L873.81,370.80 L874.40,370.86 L874.99,370.91 L875.58,370.97 L876.18,371.02 L876.77,371.08 L877.36,371.13 L877.96,371.18 L878.55,371.24 L879.14,371.29 L879.73,371.34 L880.33,371.40 L880.92,371.45 L881.51,371.50 L882.10,371.55 L882.70,371.61 L883.29,371.66 L883.88,371.71 L884.47,371.76 L885.07,371.81 L885.66,371.87 L886.25,371.92 L886.84,371.97 L887.44,372.02 L888.03,372.07 L888.62,372.12 L889.22,372.17 L889.81,372.22 L890.40,372.27 L890.99,372.32 L891.59,372.37 L892.18,372.42 L892.77,372.47 L893.36,372.52 L893.96,372.57 L894.55,372.62 L895.14,372.67 L895.73,372.72 L896.33,372.77 L896.92,372.82 L897.51,372.86 L898.10,372.91 L898.70,372.96 L899.29,373.01 L899.88,373.06 L900.48,373.10 L901.07,373.15 L901.66,373.20 L902.25,373.25 L902.85,373.29 L903.44,373.34 L904.03,373.39 L904.62,373.43 L905.22,373.48 L905.81,373.53 L906.40,373.57 L906.99,373.62 L907.59,373.67 L908.18,373.71 L908.77,373.76 L909.37,373.80 L909.96,373.85 L910.55,373.89 L911.14,373.94 L911.74,373.99 L912.33,374.03 L912.92,374.08 L913.51,374.12 L914.11,374.16 L914.70,374.21 L915.29,374.25 L915.88,374.30 L916.48,374.34 L917.07,374.39 L917.66,374.43 L918.25,374.47 L918.85,374.52 L919.44,374.56 L920.03,374.60 L920.63,374.65 L921.22,374.69 L921.81,374.73 L922.40,374.78 L923.00,374.82 L923.59,374.86 L924.18,374.90 L924.77,374.95 L925.37,374.99 L925.96,375.03 L926.55,375.07 L927.14,375.11 L927.74,375.16 L928.33,375.20 L928.92,375.24 L929.51,375.28 L930.11,375.32 L930.70,375.36" stroke="#3BAA32" stroke-width="1.33" fill="none" stroke-dasharray="10.67 5.33" stroke-dashoffset="4.1"/>
<path d="M581.58,79.00 L581.64,79.23 L582.23,81.69 L582.82,84.13 L583.41,86.52 L584.01,88.88 L584.60,91.20 L585.19,93.49 L585.78,95.75 L586.38,97.98 L586.97,100.17 L587.56,102.33 L588.15,104.46 L588.75,106.56 L589.34,108.64 L589.93,110.68 L590.53,112.70 L591.12,114.68 L591.71,116.65 L592.30,118.58 L592.90,120.49 L593.49,122.38 L594.08,124.23 L594.67,126.07 L595.27,127.88 L595.86,129.67 L596.45,131.43 L597.04,133.18 L597.64,134.90 L598.23,136.60 L598.82,138.27 L599.41,139.93 L600.01,141.57 L600.60,143.18 L601.19,144.78 L601.79,146.36 L602.38,147.91 L602.97,149.45 L603.56,150.97 L604.16,152.48 L604.75,153.96 L605.34,155.43 L605.93,156.88 L606.53,158.32 L607.12,159.73 L607.71,161.14 L608.30,162.52 L608.90,163.89 L609.49,165.25 L610.08,166.58 L610.68,167.91 L611.27,169.22 L611.86,170.51 L612.45,171.80 L613.05,173.06 L613.64,174.32 L614.23,175.56 L614.82,176.78 L615.42,178.00 L616.01,179.20 L616.60,180.39 L617.19,181.56 L617.79,182.73 L618.38,183.88 L618.97,185.02 L619.56,186.15 L620.16,187.26 L620.75,188.37 L621.34,189.46 L621.94,190.55 L622.53,191.62 L623.12,192.68 L623.71,193.73 L624.31,194.77 L624.90,195.80 L625.49,196.82 L626.08,197.83 L626.68,198.83 L627.27,199.83 L627.86,200.81 L628.45,201.78 L629.05,202.74 L629.64,203.70 L630.23,204.64 L630.82,205.58 L631.42,206.51 L632.01,207.42 L632.60,208.33 L633.20,209.24 L633.79,210.13 L634.38,211.02 L634.97,211.89 L635.57,212.76 L636.16,213.63 L636.75,214.48 L637.34,215.33 L637.94,216.17 L638.53,217.00 L639.12,217.82 L639.71,218.64 L640.31,219.45 L640.90,220.25 L641.49,221.05 L642.08,221.84 L642.68,222.62 L643.27,223.40 L643.86,224.17 L644.46,224.93 L645.05,225.69 L645.64,226.44 L646.23,227.18 L646.83,227.92 L647.42,228.65 L648.01,229.38 L648.60,230.10 L649.20,230.81 L649.79,231.52 L650.38,232.22 L650.97,232.92 L651.57,233.61 L652.16,234.29 L652.75,234.97 L653.35,235.65 L653.94,236.32 L654.53,236.98 L655.12,237.64 L655.72,238.30 L656.31,238.94 L656.90,239.59 L657.49,240.23 L658.09,240.86 L658.68,241.49 L659.27,242.11 L659.86,242.73 L660.46,243.35 L661.05,243.96 L661.64,244.56 L662.23,245.16 L662.83,245.76 L663.42,246.35 L664.01,246.94 L664.61,247.52 L665.20,248.10 L665.79,248.68 L666.38,249.25 L666.98,249.81 L667.57,250.38 L668.16,250.93 L668.75,251.49 L669.35,252.04 L669.94,252.58 L670.53,253.13 L671.12,253.67 L671.72,254.20 L672.31,254.73 L672.90,255.26 L673.49,255.78 L674.09,256.30 L674.68,256.82 L675.27,257.33 L675.87,257.84 L676.46,258.35 L677.05,258.85 L677.64,259.35 L678.24,259.84 L678.83,260.33 L679.42,260.82 L680.01,261.31 L680.61,261.79 L681.20,262.27 L681.79,262.75 L682.38,263.22 L682.98,263.69 L683.57,264.15 L684.16,264.62 L684.75,265.08 L685.35,265.53 L685.94,265.99 L686.53,266.44 L687.13,266.89 L687.72,267.33 L688.31,267.78 L688.90,268.22 L689.50,268.65 L690.09,269.09 L690.68,269.52 L691.27,269.95 L691.87,270.37 L692.46,270.80 L693.05,271.22 L693.64,271.64 L694.24,272.05 L694.83,272.46 L695.42,272.88 L696.01,273.28 L696.61,273.69 L697.20,274.09 L697.79,274.49 L698.39,274.89 L698.98,275.28 L699.57,275.68 L700.16,276.07 L700.76,276.46 L701.35,276.84 L701.94,277.23 L702.53,277.61 L703.13,277.99 L703.72,278.36 L704.31,278.74 L704.90,279.11 L705.50,279.48 L706.09,279.85 L706.68,280.22 L707.28,280.58 L707.87,280.94 L708.46,281.30 L709.05,281.66 L709.65,282.01 L710.24,282.37 L710.83,282.72 L711.42,283.07 L712.02,283.41 L712.61,283.76 L713.20,284.10 L713.79,284.45 L714.39,284.78 L714.98,285.12 L715.57,285.46 L716.16,285.79 L716.76,286.12 L717.35,286.45 L717.94,286.78 L718.54,287.11 L719.13,287.43 L719.72,287.76 L720.31,288.08 L720.91,288.40 L721.50,288.72 L722.09,289.03 L722.68,289.35 L723.28,289.66 L723.87,289.97 L724.46,290.28 L725.05,290.59 L725.65,290.89 L726.24,291.20 L726.83,291.50 L727.42,291.80 L728.02,292.10 L728.61,292.40 L729.20,292.69 L729.80,292.99 L730.39,293.28 L730.98,293.57 L731.57,293.86 L732.17,294.15 L732.76,294.44 L733.35,294.73 L733.94,295.01 L734.54,295.29 L735.13,295.57 L735.72,295.85 L736.31,296.13 L736.91,296.41 L737.50,296.68 L738.09,296.96 L738.68,297.23 L739.28,297.50 L739.87,297.77 L740.46,298.04 L741.06,298.31 L741.65,298.58 L742.24,298.84 L742.83,299.10 L743.43,299.37 L744.02,299.63 L744.61,299.89 L745.20,300.14 L745.80,300.40 L746.39,300.66 L746.98,300.91 L747.57,301.16 L748.17,301.42 L748.76,301.67 L749.35,301.92 L749.95,302.17 L750.54,302.41 L751.13,302.66 L751.72,302.90 L752.32,303.15 L752.91,303.39 L753.50,303.63 L754.09,303.87 L754.69,304.11 L755.28,304.35 L755.87,304.59 L756.46,304.82 L757.06,305.06 L757.65,305.29 L758.24,305.52 L758.83,305.75 L759.43,305.98 L760.02,306.21 L760.61,306.44 L761.21,306.67 L761.80,306.89 L762.39,307.12 L762.98,307.34 L763.58,307.57 L764.17,307.79 L764.76,308.01 L765.35,308.23 L765.95,308.45 L766.54,308.67 L767.13,308.88 L767.72,309.10 L768.32,309.31 L768.91,309.53 L769.50,309.74 L770.09,309.95 L770.69,310.16 L771.28,310.37 L771.87,310.58 L772.47,310.79 L773.06,311.00 L773.65,311.21 L774.24,311.41 L774.84,311.62 L775.43,311.82 L776.02,312.02 L776.61,312.23 L777.21,312.43 L777.80,312.63 L778.39,312.83 L778.98,313.03 L779.58,313.22 L780.17,313.42 L780.76,313.62 L781.36,313.81 L781.95,314.01 L782.54,314.20 L783.13,314.39 L783.73,314.58 L784.32,314.78 L784.91,314.97 L785.50,315.16 L786.10,315.34 L786.69,315.53 L787.28,315.72 L787.87,315.91 L788.47,316.09 L789.06,316.28 L789.65,316.46 L790.24,316.64 L790.84,316.83 L791.43,317.01 L792.02,317.19 L792.62,317.37 L793.21,317.55 L793.80,317.73 L794.39,317.91 L794.99,318.08 L795.58,318.26 L796.17,318.44 L796.76,318.61 L797.36,318.79 L797.95,318.96 L798.54,319.13 L799.13,319.30 L799.73,319.48 L800.32,319.65 L800.91,319.82 L801.50,319.99 L802.10,320.16 L802.69,320.32 L803.28,320.49 L803.88,320.66 L804.47,320.83 L805.06,320.99 L805.65,321.16 L806.25,321.32 L806.84,321.48 L807.43,321.65 L808.02,321.81 L808.62,321.97 L809.21,322.13 L809.80,322.29 L810.39,322.45 L810.99,322.61 L811.58,322.77 L812.17,322.93 L812.76,323.09 L813.36,323.24 L813.95,323.40 L814.54,323.56 L815.14,323.71 L815.73,323.87 L816.32,324.02 L816.91,324.17 L817.51,324.33 L818.10,324.48 L818.69,324.63 L819.28,324.78 L819.88,324.93 L820.47,325.08 L821.06,325.23 L821.65,325.38 L822.25,325.53 L822.84,325.68 L823.43,325.82 L824.03,325.97 L824.62,326.12 L825.21,326.26 L825.80,326.41 L826.40,326.55 L826.99,326.69 L827.58,326.84 L828.17,326.98 L828.77,327.12 L829.36,327.27 L829.95,327.41 L830.54,327.55 L831.14,327.69 L831.73,327.83 L832.32,327.97 L832.91,328.11 L833.51,328.24 L834.10,328.38 L834.69,328.52 L835.29,328.66 L835.88,328.79 L836.47,328.93 L837.06,329.06 L837.66,329.20 L838.25,329.33 L838.84,329.47 L839.43,329.60 L840.03,329.73 L840.62,329.87 L841.21,330.00 L841.80,330.13 L842.40,330.26 L842.99,330.39 L843.58,330.52 L844.17,330.65 L844.77,330.78 L845.36,330.91 L845.95,331.04 L846.55,331.17 L847.14,331.29 L847.73,331.42 L848.32,331.55 L848.92,331.67 L849.51,331.80 L850.10,331.92 L850.69,332.05 L851.29,332.17 L851.88,332.30 L852.47,332.42 L853.06,332.54 L853.66,332.67 L854.25,332.79 L854.84,332.91 L855.43,333.03 L856.03,333.15 L856.62,333.28 L857.21,333.40 L857.81,333.52 L858.40,333.63 L858.99,333.75 L859.58,333.87 L860.18,333.99 L860.77,334.11 L861.36,334.23 L861.95,334.34 L862.55,334.46 L863.14,334.58 L863.73,334.69 L864.32,334.81 L864.92,334.92 L865.51,335.04 L866.10,335.15 L866.70,335.27 L867.29,335.38 L867.88,335.49 L868.47,335.61 L869.07,335.72 L869.66,335.83 L870.25,335.94 L870.84,336.06 L871.44,336.17 L872.03,336.28 L872.62,336.39 L873.21,336.50 L873.81,336.61 L874.40,336.72 L874.99,336.83 L875.58,336.94 L876.18,337.04 L876.77,337.15 L877.36,337.26 L877.96,337.37 L878.55,337.47 L879.14,337.58 L879.73,337.69 L880.33,337.79 L880.92,337.90 L881.51,338.00 L882.10,338.11 L882.70,338.21 L883.29,338.32 L883.88,338.42 L884.47,338.53 L885.07,338.63 L885.66,338.73 L886.25,338.84 L886.84,338.94 L887.44,339.04 L888.03,339.14 L888.62,339.24 L889.22,339.34 L889.81,339.44 L890.40,339.55 L890.99,339.65 L891.59,339.75 L892.18,339.85 L892.77,339.94 L893.36,340.04 L893.96,340.14 L894.55,340.24 L895.14,340.34 L895.73,340.44 L896.33,340.53 L896.92,340.63 L897.51,340.73 L898.10,340.83 L898.70,340.92 L899.29,341.02 L899.88,341.11 L900.48,341.21 L901.07,341.30 L901.66,341.40 L902.25,341.49 L902.85,341.59 L903.44,341.68 L904.03,341.78 L904.62,341.87 L905.22,341.96 L905.81,342.06 L906.40,342.15 L906.99,342.24 L907.59,342.33 L908.18,342.42 L908.77,342.52 L909.37,342.61 L909.96,342.70 L910.55,342.79 L911.14,342.88 L911.74,342.97 L912.33,343.06 L912.92,343.15 L913.51,343.24 L914.11,343.33 L914.70,343.42 L915.29,343.51 L915.88,343.60 L916.48,343.68 L917.07,343.77 L917.66,343.86 L918.25,343.95 L918.85,344.03 L919.44,344.12 L920.03,344.21 L920.63,344.29 L921.22,344.38 L921.81,344.47 L922.40,344.55 L923.00,344.64 L923.59,344.72 L924.18,344.81 L924.77,344.89 L925.37,344.98 L925.96,345.06 L926.55,345.15 L927.14,345.23 L927.74,345.31 L928.33,345.40 L928.92,345.48 L929.51,345.56 L930.11,345.64 L930.70,345.73" stroke="#2FBEEF" stroke-width="1.33" fill="none" stroke-dasharray="10.67 5.33" stroke-dashoffset="14.6"/>
<path d="M620.37,79.00 L620.75,80.05 L621.34,81.69 L621.94,83.32 L622.53,84.93 L623.12,86.52 L623.71,88.10 L624.31,89.66 L624.90,91.20 L625.49,92.73 L626.08,94.25 L626.68,95.75 L627.27,97.24 L627.86,98.71 L628.45,100.17 L629.05,101.61 L629.64,103.04 L630.23,104.46 L630.82,105.87 L631.42,107.26 L632.01,108.64 L632.60,110.00 L633.20,111.36 L633.79,112.70 L634.38,114.02 L634.97,115.34 L635.57,116.65 L636.16,117.94 L636.75,119.22 L637.34,120.49 L637.94,121.75 L638.53,123.00 L639.12,124.23 L639.71,125.46 L640.31,126.68 L640.90,127.88 L641.49,129.08 L642.08,130.26 L642.68,131.43 L643.27,132.60 L643.86,133.75 L644.46,134.90 L645.05,136.03 L645.64,137.16 L646.23,138.27 L646.83,139.38 L647.42,140.48 L648.01,141.57 L648.60,142.65 L649.20,143.72 L649.79,144.78 L650.38,145.83 L650.97,146.88 L651.57,147.91 L652.16,148.94 L652.75,149.96 L653.35,150.97 L653.94,151.98 L654.53,152.97 L655.12,153.96 L655.72,154.94 L656.31,155.92 L656.90,156.88 L657.49,157.84 L658.09,158.79 L658.68,159.73 L659.27,160.67 L659.86,161.60 L660.46,162.52 L661.05,163.44 L661.64,164.34 L662.23,165.25 L662.83,166.14 L663.42,167.03 L664.01,167.91 L664.61,168.78 L665.20,169.65 L665.79,170.51 L666.38,171.37 L666.98,172.22 L667.57,173.06 L668.16,173.90 L668.75,174.73 L669.35,175.56 L669.94,176.38 L670.53,177.19 L671.12,178.00 L671.72,178.80 L672.31,179.60 L672.90,180.39 L673.49,181.17 L674.09,181.95 L674.68,182.73 L675.27,183.50 L675.87,184.26 L676.46,185.02 L677.05,185.77 L677.64,186.52 L678.24,187.26 L678.83,188.00 L679.42,188.73 L680.01,189.46 L680.61,190.19 L681.20,190.90 L681.79,191.62 L682.38,192.33 L682.98,193.03 L683.57,193.73 L684.16,194.43 L684.75,195.12 L685.35,195.80 L685.94,196.48 L686.53,197.16 L687.13,197.83 L687.72,198.50 L688.31,199.17 L688.90,199.83 L689.50,200.48 L690.09,201.13 L690.68,201.78 L691.27,202.42 L691.87,203.06 L692.46,203.70 L693.05,204.33 L693.64,204.95 L694.24,205.58 L694.83,206.20 L695.42,206.81 L696.01,207.42 L696.61,208.03 L697.20,208.64 L697.79,209.24 L698.39,209.83 L698.98,210.43 L699.57,211.02 L700.16,211.60 L700.76,212.19 L701.35,212.76 L701.94,213.34 L702.53,213.91 L703.13,214.48 L703.72,215.05 L704.31,215.61 L704.90,216.17 L705.50,216.72 L706.09,217.27 L706.68,217.82 L707.28,218.37 L707.87,218.91 L708.46,219.45 L709.05,219.99 L709.65,220.52 L710.24,221.05 L710.83,221.58 L711.42,222.10 L712.02,222.62 L712.61,223.14 L713.20,223.66 L713.79,224.17 L714.39,224.68 L714.98,225.18 L715.57,225.69 L716.16,226.19 L716.76,226.69 L717.35,227.18 L717.94,227.67 L718.54,228.16 L719.13,228.65 L719.72,229.14 L720.31,229.62 L720.91,230.10 L721.50,230.57 L722.09,231.05 L722.68,231.52 L723.28,231.99 L723.87,232.45 L724.46,232.92 L725.05,233.38 L725.65,233.84 L726.24,234.29 L726.83,234.75 L727.42,235.20 L728.02,235.65 L728.61,236.10 L729.20,236.54 L729.80,236.98 L730.39,237.42 L730.98,237.86 L731.57,238.30 L732.17,238.73 L732.76,239.16 L733.35,239.59 L733.94,240.01 L734.54,240.44 L735.13,240.86 L735.72,241.28 L736.31,241.70 L736.91,242.11 L737.50,242.53 L738.09,242.94 L738.68,243.35 L739.28,243.75 L739.87,244.16 L740.46,244.56 L741.06,244.96 L741.65,245.36 L742.24,245.76 L742.83,246.15 L743.43,246.55 L744.02,246.94 L744.61,247.33 L745.20,247.72 L745.80,248.10 L746.39,248.49 L746.98,248.87 L747.57,249.25 L748.17,249.62 L748.76,250.00 L749.35,250.38 L749.95,250.75 L750.54,251.12 L751.13,251.49 L751.72,251.86 L752.32,252.22 L752.91,252.58 L753.50,252.95 L754.09,253.31 L754.69,253.67 L755.28,254.02 L755.87,254.38 L756.46,254.73 L757.06,255.08 L757.65,255.43 L758.24,255.78 L758.83,256.13 L759.43,256.47 L760.02,256.82 L760.61,257.16 L761.21,257.50 L761.80,257.84 L762.39,258.18 L762.98,258.51 L763.58,258.85 L764.17,259.18 L764.76,259.51 L765.35,259.84 L765.95,260.17 L766.54,260.50 L767.13,260.82 L767.72,261.15 L768.32,261.47 L768.91,261.79 L769.50,262.11 L770.09,262.43 L770.69,262.75 L771.28,263.06 L771.87,263.37 L772.47,263.69 L773.06,264.00 L773.65,264.31 L774.24,264.62 L774.84,264.92 L775.43,265.23 L776.02,265.53 L776.61,265.84 L777.21,266.14 L777.80,266.44 L778.39,266.74 L778.98,267.04 L779.58,267.33 L780.17,267.63 L780.76,267.92 L781.36,268.22 L781.95,268.51 L782.54,268.80 L783.13,269.09 L783.73,269.38 L784.32,269.66 L784.91,269.95 L785.50,270.23 L786.10,270.52 L786.69,270.80 L787.28,271.08 L787.87,271.36 L788.47,271.64 L789.06,271.91 L789.65,272.19 L790.24,272.46 L790.84,272.74 L791.43,273.01 L792.02,273.28 L792.62,273.55 L793.21,273.82 L793.80,274.09 L794.39,274.36 L794.99,274.62 L795.58,274.89 L796.17,275.15 L796.76,275.42 L797.36,275.68 L797.95,275.94 L798.54,276.20 L799.13,276.46 L799.73,276.71 L800.32,276.97 L800.91,277.23 L801.50,277.48 L802.10,277.73 L802.69,277.99 L803.28,278.24 L803.88,278.49 L804.47,278.74 L805.06,278.99 L805.65,279.23 L806.25,279.48 L806.84,279.73 L807.43,279.97 L808.02,280.22 L808.62,280.46 L809.21,280.70 L809.80,280.94 L810.39,281.18 L810.99,281.42 L811.58,281.66 L812.17,281.90 L812.76,282.13 L813.36,282.37 L813.95,282.60 L814.54,282.83 L815.14,283.07 L815.73,283.30 L816.32,283.53 L816.91,283.76 L817.51,283.99 L818.10,284.22 L818.69,284.45 L819.28,284.67 L819.88,284.90 L820.47,285.12 L821.06,285.35 L821.65,285.57 L822.25,285.79 L822.84,286.01 L823.43,286.23 L824.03,286.45 L824.62,286.67 L825.21,286.89 L825.80,287.11 L826.40,287.33 L826.99,287.54 L827.58,287.76 L828.17,287.97 L828.77,288.19 L829.36,288.40 L829.95,288.61 L830.54,288.82 L831.14,289.03 L831.73,289.24 L832.32,289.45 L832.91,289.66 L833.51,289.87 L834.10,290.07 L834.69,290.28 L835.29,290.48 L835.88,290.69 L836.47,290.89 L837.06,291.10 L837.66,291.30 L838.25,291.50 L838.84,291.70 L839.43,291.90 L840.03,292.10 L840.62,292.30 L841.21,292.50 L841.80,292.69 L842.40,292.89 L842.99,293.09 L843.58,293.28 L844.17,293.48 L844.77,293.67 L845.36,293.86 L845.95,294.06 L846.55,294.25 L847.14,294.44 L847.73,294.63 L848.32,294.82 L848.92,295.01 L849.51,295.20 L850.10,295.39 L850.69,295.57 L851.29,295.76 L851.88,295.95 L852.47,296.13 L853.06,296.32 L853.66,296.50 L854.25,296.68 L854.84,296.87 L855.43,297.05 L856.03,297.23 L856.62,297.41 L857.21,297.59 L857.81,297.77 L858.40,297.95 L858.99,298.13 L859.58,298.31 L860.18,298.49 L860.77,298.66 L861.36,298.84 L861.95,299.02 L862.55,299.19 L863.14,299.37 L863.73,299.54 L864.32,299.71 L864.92,299.89 L865.51,300.06 L866.10,300.23 L866.70,300.40 L867.29,300.57 L867.88,300.74 L868.47,300.91 L869.07,301.08 L869.66,301.25 L870.25,301.42 L870.84,301.58 L871.44,301.75 L872.03,301.92 L872.62,302.08 L873.21,302.25 L873.81,302.41 L874.40,302.58 L874.99,302.74 L875.58,302.90 L876.18,303.07 L876.77,303.23 L877.36,303.39 L877.96,303.55 L878.55,303.71 L879.14,303.87 L879.73,304.03 L880.33,304.19 L880.92,304.35 L881.51,304.51 L882.10,304.66 L882.70,304.82 L883.29,304.98 L883.88,305.13 L884.47,305.29 L885.07,305.44 L885.66,305.60 L886.25,305.75 L886.84,305.91 L887.44,306.06 L888.03,306.21 L888.62,306.36 L889.22,306.52 L889.81,306.67 L890.40,306.82 L890.99,306.97 L891.59,307.12 L892.18,307.27 L892.77,307.42 L893.36,307.57 L893.96,307.71 L894.55,307.86 L895.14,308.01 L895.73,308.15 L896.33,308.30 L896.92,308.45 L897.51,308.59 L898.10,308.74 L898.70,308.88 L899.29,309.03 L899.88,309.17 L900.48,309.31 L901.07,309.46 L901.66,309.60 L902.25,309.74 L902.85,309.88 L903.44,310.02 L904.03,310.16 L904.62,310.30 L905.22,310.44 L905.81,310.58 L906.40,310.72 L906.99,310.86 L907.59,311.00 L908.18,311.14 L908.77,311.27 L909.37,311.41 L909.96,311.55 L910.55,311.68 L911.14,311.82 L911.74,311.96 L912.33,312.09 L912.92,312.23 L913.51,312.36 L914.11,312.49 L914.70,312.63 L915.29,312.76 L915.88,312.89 L916.48,313.03 L917.07,313.16 L917.66,313.29 L918.25,313.42 L918.85,313.55 L919.44,313.68 L920.03,313.81 L920.63,313.94 L921.22,314.07 L921.81,314.20 L922.40,314.33 L923.00,314.46 L923.59,314.58 L924.18,314.71 L924.77,314.84 L925.37,314.97 L925.96,315.09 L926.55,315.22 L927.14,315.34 L927.74,315.47 L928.33,315.59 L928.92,315.72 L929.51,315.84 L930.11,315.97 L930.70,316.09" stroke="#D1048B" stroke-width="1.33" fill="none" stroke-dasharray="10.67 5.33" stroke-dashoffset="10.67"/>
<path d="M506.37,-8983.80 L506.96,-7106.04 L507.56,-5854.20 L508.15,-4960.03 L508.74,-4289.40 L509.33,-3767.80 L509.93,-3350.52 L510.52,-3009.11 L511.11,-2724.60 L511.70,-2483.86 L512.30,-2277.51 L512.89,-2098.68 L513.48,-1942.20 L514.07,-1804.13 L514.67,-1681.40 L515.26,-1571.59 L515.85,-1472.76 L516.45,-1383.34 L517.04,-1302.05 L517.63,-1227.83 L518.22,-1159.80 L518.82,-1097.21 L519.41,-1039.43 L520.00,-985.93 L520.59,-936.26 L521.19,-890.01 L521.78,-846.84 L522.37,-806.46 L522.96,-768.60 L523.56,-733.04 L524.15,-699.56 L524.74,-668.01 L525.34,-638.20 L525.93,-610.01 L526.52,-583.29 L527.11,-557.95 L527.71,-533.88 L528.30,-510.98 L528.89,-489.17 L529.48,-468.38 L530.08,-448.53 L530.67,-429.56 L531.26,-411.42 L531.85,-394.05 L532.45,-377.40 L533.04,-361.43 L533.63,-346.10 L534.22,-331.38 L534.82,-317.22 L535.41,-303.59 L536.00,-290.47 L536.60,-277.82 L537.19,-265.63 L537.78,-253.86 L538.37,-242.50 L538.97,-231.53 L539.56,-220.92 L540.15,-210.66 L540.74,-200.73 L541.34,-191.11 L541.93,-181.80 L542.52,-172.77 L543.11,-164.02 L543.71,-155.53 L544.30,-147.28 L544.89,-139.28 L545.48,-131.50 L546.08,-123.95 L546.67,-116.60 L547.26,-109.45 L547.86,-102.50 L548.45,-95.74 L549.04,-89.15 L549.63,-82.73 L550.23,-76.48 L550.82,-70.38 L551.41,-64.44 L552.00,-58.64 L552.60,-52.99 L553.19,-47.47 L553.78,-42.09 L554.37,-36.83 L554.97,-31.69 L555.56,-26.67 L556.15,-21.76 L556.74,-16.97 L557.34,-12.28 L557.93,-7.69 L558.52,-3.21 L559.12,1.18 L559.71,5.48 L560.30,9.68 L560.89,13.80 L561.49,17.83 L562.08,21.78 L562.67,25.65 L563.26,29.45 L563.86,33.17 L564.45,36.81 L565.04,40.39 L565.63,43.89 L566.23,47.33 L566.82,50.71 L567.41,54.02 L568.00,57.27 L568.60,60.46 L569.19,63.59 L569.78,66.66 L570.38,69.69 L570.97,72.65 L571.56,75.57 L572.15,78.43 L572.75,81.25 L573.34,84.02 L573.93,86.74 L574.52,89.41 L575.12,92.04 L575.71,94.63 L576.30,97.17 L576.89,99.67 L577.49,102.14 L578.08,104.56 L578.67,106.94 L579.27,109.29 L579.86,111.60 L580.45,113.87 L581.04,116.11 L581.64,118.32 L582.23,120.49 L582.82,122.63 L583.41,124.74 L584.01,126.81 L584.60,128.86 L585.19,130.87 L585.78,132.86 L586.38,134.82 L586.97,136.75 L587.56,138.65 L588.15,140.53 L588.75,142.38 L589.34,144.20 L589.93,146.00 L590.53,147.77 L591.12,149.52 L591.71,151.25 L592.30,152.95 L592.90,154.63 L593.49,156.29 L594.08,157.93 L594.67,159.54 L595.27,161.14 L595.86,162.71 L596.45,164.26 L597.04,165.79 L597.64,167.31 L598.23,168.80 L598.82,170.28 L599.41,171.74 L600.01,173.18 L600.60,174.60 L601.19,176.00 L601.79,177.39 L602.38,178.76 L602.97,180.12 L603.56,181.46 L604.16,182.78 L604.75,184.09 L605.34,185.38 L605.93,186.66 L606.53,187.92 L607.12,189.17 L607.71,190.40 L608.30,191.62 L608.90,192.82 L609.49,194.02 L610.08,195.19 L610.68,196.36 L611.27,197.51 L611.86,198.65 L612.45,199.78 L613.05,200.90 L613.64,202.00 L614.23,203.09 L614.82,204.17 L615.42,205.24 L616.01,206.30 L616.60,207.34 L617.19,208.38 L617.79,209.40 L618.38,210.41 L618.97,211.42 L619.56,212.41 L620.16,213.39 L620.75,214.36 L621.34,215.33 L621.94,216.28 L622.53,217.22 L623.12,218.16 L623.71,219.08 L624.31,220.00 L624.90,220.91 L625.49,221.80 L626.08,222.69 L626.68,223.57 L627.27,224.45 L627.86,225.31 L628.45,226.17 L629.05,227.01 L629.64,227.85 L630.23,228.68 L630.82,229.51 L631.42,230.32 L632.01,231.13 L632.60,231.93 L633.20,232.73 L633.79,233.52 L634.38,234.29 L634.97,235.07 L635.57,235.83 L636.16,236.59 L636.75,237.34 L637.34,238.09 L637.94,238.83 L638.53,239.56 L639.12,240.28 L639.71,241.00 L640.31,241.72 L640.90,242.42 L641.49,243.12 L642.08,243.82 L642.68,244.51 L643.27,245.19 L643.86,245.87 L644.46,246.54 L645.05,247.21 L645.64,247.87 L646.23,248.52 L646.83,249.17 L647.42,249.81 L648.01,250.45 L648.60,251.09 L649.20,251.71 L649.79,252.34 L650.38,252.95 L650.97,253.57 L651.57,254.18 L652.16,254.78 L652.75,255.38 L653.35,255.97 L653.94,256.56 L654.53,257.14 L655.12,257.72 L655.72,258.30 L656.31,258.87 L656.90,259.44 L657.49,260.00 L658.09,260.56 L658.68,261.11 L659.27,261.66 L659.86,262.20 L660.46,262.75 L661.05,263.28 L661.64,263.82 L662.23,264.34 L662.83,264.87 L663.42,265.39 L664.01,265.91 L664.61,266.42 L665.20,266.93 L665.79,267.44 L666.38,267.94 L666.98,268.44 L667.57,268.93 L668.16,269.42 L668.75,269.91 L669.35,270.39 L669.94,270.87 L670.53,271.35 L671.12,271.83 L671.72,272.30 L672.31,272.76 L672.90,273.23 L673.49,273.69 L674.09,274.15 L674.68,274.60 L675.27,275.05 L675.87,275.50 L676.46,275.94 L677.05,276.39 L677.64,276.83 L678.24,277.26 L678.83,277.69 L679.42,278.12 L680.01,278.55 L680.61,278.98 L681.20,279.40 L681.79,279.82 L682.38,280.23 L682.98,280.65 L683.57,281.06 L684.16,281.46 L684.75,281.87 L685.35,282.27 L685.94,282.67 L686.53,283.07 L687.13,283.46 L687.72,283.85 L688.31,284.24 L688.90,284.63 L689.50,285.02 L690.09,285.40 L690.68,285.78 L691.27,286.15 L691.87,286.53 L692.46,286.90 L693.05,287.27 L693.64,287.64 L694.24,288.01 L694.83,288.37 L695.42,288.73 L696.01,289.09 L696.61,289.45 L697.20,289.80 L697.79,290.15 L698.39,290.50 L698.98,290.85 L699.57,291.20 L700.16,291.54 L700.76,291.88 L701.35,292.22 L701.94,292.56 L702.53,292.89 L703.13,293.23 L703.72,293.56 L704.31,293.89 L704.90,294.22 L705.50,294.54 L706.09,294.87 L706.68,295.19 L707.28,295.51 L707.87,295.83 L708.46,296.14 L709.05,296.46 L709.65,296.77 L710.24,297.08 L710.83,297.39 L711.42,297.70 L712.02,298.01 L712.61,298.31 L713.20,298.61 L713.79,298.91 L714.39,299.21 L714.98,299.51 L715.57,299.80 L716.16,300.10 L716.76,300.39 L717.35,300.68 L717.94,300.97 L718.54,301.26 L719.13,301.54 L719.72,301.83 L720.31,302.11 L720.91,302.39 L721.50,302.67 L722.09,302.95 L722.68,303.22 L723.28,303.50 L723.87,303.77 L724.46,304.05 L725.05,304.32 L725.65,304.59 L726.24,304.85 L726.83,305.12 L727.42,305.38 L728.02,305.65 L728.61,305.91 L729.20,306.17 L729.80,306.43 L730.39,306.69 L730.98,306.94 L731.57,307.20 L732.17,307.45 L732.76,307.71 L733.35,307.96 L733.94,308.21 L734.54,308.46 L735.13,308.70 L735.72,308.95 L736.31,309.20 L736.91,309.44 L737.50,309.68 L738.09,309.92 L738.68,310.16 L739.28,310.40 L739.87,310.64 L740.46,310.88 L741.06,311.11 L741.65,311.35 L742.24,311.58 L742.83,311.81 L743.43,312.04 L744.02,312.27 L744.61,312.50 L745.20,312.73 L745.80,312.95 L746.39,313.18 L746.98,313.40 L747.57,313.62 L748.17,313.85 L748.76,314.07 L749.35,314.29 L749.95,314.51 L750.54,314.72 L751.13,314.94 L751.72,315.16 L752.32,315.37 L752.91,315.58 L753.50,315.80 L754.09,316.01 L754.69,316.22 L755.28,316.43 L755.87,316.63 L756.46,316.84 L757.06,317.05 L757.65,317.25 L758.24,317.46 L758.83,317.66 L759.43,317.86 L760.02,318.07 L760.61,318.27 L761.21,318.47 L761.80,318.67 L762.39,318.86 L762.98,319.06 L763.58,319.26 L764.17,319.45 L764.76,319.65 L765.35,319.84 L765.95,320.03 L766.54,320.23 L767.13,320.42 L767.72,320.61 L768.32,320.80 L768.91,320.98 L769.50,321.17 L770.09,321.36 L770.69,321.54 L771.28,321.73 L771.87,321.91 L772.47,322.10 L773.06,322.28 L773.65,322.46 L774.24,322.64 L774.84,322.82 L775.43,323.00 L776.02,323.18 L776.61,323.36 L777.21,323.54 L777.80,323.71 L778.39,323.89 L778.98,324.06 L779.58,324.24 L780.17,324.41 L780.76,324.58 L781.36,324.75 L781.95,324.92 L782.54,325.10 L783.13,325.26 L783.73,325.43 L784.32,325.60 L784.91,325.77 L785.50,325.94 L786.10,326.10 L786.69,326.27 L787.28,326.43 L787.87,326.60 L788.47,326.76 L789.06,326.92 L789.65,327.08 L790.24,327.25 L790.84,327.41 L791.43,327.57 L792.02,327.73 L792.62,327.88 L793.21,328.04 L793.80,328.20 L794.39,328.36 L794.99,328.51 L795.58,328.67 L796.17,328.82 L796.76,328.98 L797.36,329.13 L797.95,329.28 L798.54,329.44 L799.13,329.59 L799.73,329.74 L800.32,329.89 L800.91,330.04 L801.50,330.19 L802.10,330.34 L802.69,330.49 L803.28,330.63 L803.88,330.78 L804.47,330.93 L805.06,331.07 L805.65,331.22 L806.25,331.36 L806.84,331.51 L807.43,331.65 L808.02,331.79 L808.62,331.94 L809.21,332.08 L809.80,332.22 L810.39,332.36 L810.99,332.50 L811.58,332.64 L812.17,332.78 L812.76,332.92 L813.36,333.06 L813.95,333.19 L814.54,333.33 L815.14,333.47 L815.73,333.60 L816.32,333.74 L816.91,333.87 L817.51,334.01 L818.10,334.14 L818.69,334.27 L819.28,334.41 L819.88,334.54 L820.47,334.67 L821.06,334.80 L821.65,334.93 L822.25,335.06 L822.84,335.19 L823.43,335.32 L824.03,335.45 L824.62,335.58 L825.21,335.71 L825.80,335.84 L826.40,335.96 L826.99,336.09 L827.58,336.22 L828.17,336.34 L828.77,336.47 L829.36,336.59 L829.95,336.72 L830.54,336.84 L831.14,336.97 L831.73,337.09 L832.32,337.21 L832.91,337.33 L833.51,337.45 L834.10,337.58 L834.69,337.70 L835.29,337.82 L835.88,337.94 L836.47,338.06 L837.06,338.18 L837.66,338.29 L838.25,338.41 L838.84,338.53 L839.43,338.65 L840.03,338.77 L840.62,338.88 L841.21,339.00 L841.80,339.11 L842.40,339.23 L842.99,339.34 L843.58,339.46 L844.17,339.57 L844.77,339.69 L845.36,339.80 L845.95,339.91 L846.55,340.03 L847.14,340.14 L847.73,340.25 L848.32,340.36 L848.92,340.47 L849.51,340.58 L850.10,340.69 L850.69,340.80 L851.29,340.91 L851.88,341.02 L852.47,341.13 L853.06,341.24 L853.66,341.35 L854.25,341.45 L854.84,341.56 L855.43,341.67 L856.03,341.78 L856.62,341.88 L857.21,341.99 L857.81,342.09 L858.40,342.20 L858.99,342.30 L859.58,342.41 L860.18,342.51 L860.77,342.62 L861.36,342.72 L861.95,342.82 L862.55,342.93 L863.14,343.03 L863.73,343.13 L864.32,343.23 L864.92,343.33 L865.51,343.43 L866.10,343.53 L866.70,343.64 L867.29,343.74 L867.88,343.84 L868.47,343.93 L869.07,344.03 L869.66,344.13 L870.25,344.23 L870.84,344.33 L871.44,344.43 L872.03,344.52 L872.62,344.62 L873.21,344.72 L873.81,344.82 L874.40,344.91 L874.99,345.01 L875.58,345.10 L876.18,345.20 L876.77,345.29 L877.36,345.39 L877.96,345.48 L878.55,345.58 L879.14,345.67 L879.73,345.76 L880.33,345.86 L880.92,345.95 L881.51,346.04 L882.10,346.14 L882.70,346.23 L883.29,346.32 L883.88,346.41 L884.47,346.50 L885.07,346.59 L885.66,346.68 L886.25,346.77 L886.84,346.87 L887.44,346.95 L888.03,347.04 L888.62,347.13 L889.22,347.22 L889.81,347.31 L890.40,347.40 L890.99,347.49 L891.59,347.58 L892.18,347.66 L892.77,347.75 L893.36,347.84 L893.96,347.93 L894.55,348.01 L895.14,348.10 L895.73,348.18 L896.33,348.27 L896.92,348.36 L897.51,348.44 L898.10,348.53 L898.70,348.61 L899.29,348.70 L899.88,348.78 L900.48,348.86 L901.07,348.95 L901.66,349.03 L902.25,349.11 L902.85,349.20 L903.44,349.28 L904.03,349.36 L904.62,349.44 L905.22,349.53 L905.81,349.61 L906.40,349.69 L906.99,349.77 L907.59,349.85 L908.18,349.93 L908.77,350.01 L909.37,350.09 L909.96,350.17 L910.55,350.25 L911.14,350.33 L911.74,350.41 L912.33,350.49 L912.92,350.57 L913.51,350.65 L914.11,350.73 L914.70,350.81 L915.29,350.89 L915.88,350.96 L916.48,351.04 L917.07,351.12 L917.66,351.20 L918.25,351.27 L918.85,351.35 L919.44,351.43 L920.03,351.50 L920.63,351.58 L921.22,351.65 L921.81,351.73 L922.40,351.81 L923.00,351.88 L923.59,351.96 L924.18,352.03 L924.77,352.11 L925.37,352.18 L925.96,352.25 L926.55,352.33 L927.14,352.40 L927.74,352.48 L928.33,352.55 L928.92,352.62 L929.51,352.69 L930.11,352.77 L930.70,352.84 L931,352.84 L931,28.5 L506.37,28.5 Z" fill="#808080" fill-opacity="0.28"/>
</g>
<circle cx="892.5" cy="398.4" r="3.1" fill="#808080" stroke="#fdfbd3" stroke-width="1.3"/>
<path d="M503.4,78 V405.5 H931" stroke="#1f1f1f" stroke-width="1.3" fill="none"/>
<path d="M551.5,405 v-4.5 M598.5,405 v-4.5 M646.5,405 v-4.5 M693.5,405 v-4.5 M741.5,405 v-4.5 M788.5,405 v-4.5 M835.5,405 v-4.5 M883.5,405 v-4.5 M930.5,405 v-4.5 M504,375.5 h4.5 M504,345.5 h4.5 M504,316.5 h4.5 M504,286.5 h4.5 M504,256.5 h4.5 M504,227.5 h4.5 M504,197.5 h4.5 M504,167.5 h4.5 M504,138.5 h4.5 M504,108.5 h4.5 M504,78.5 h4.5" stroke="#1f1f1f" stroke-width="1.2" fill="none"/>
<g font-family="Liberation Sans, sans-serif" font-size="13.33" fill="#363636" letter-spacing="-0.2">
<text x="503.7" y="424.7" text-anchor="middle">0</text>
<text x="551.1" y="424.7" text-anchor="middle">20</text>
<text x="598.5" y="424.7" text-anchor="middle">40</text>
<text x="645.9" y="424.7" text-anchor="middle">60</text>
<text x="693.3" y="424.7" text-anchor="middle">80</text>
<text x="740.8" y="424.7" text-anchor="middle">100</text>
<text x="788.2" y="424.7" text-anchor="middle">120</text>
<text x="835.6" y="424.7" text-anchor="middle">140</text>
<text x="883.0" y="424.7" text-anchor="middle">160</text>
<text x="930.4" y="424.7" text-anchor="middle">180</text>
<text x="495.4" y="410" text-anchor="end">0</text>
<text x="495.4" y="380" text-anchor="end">1000</text>
<text x="495.4" y="351" text-anchor="end">2000</text>
<text x="495.4" y="321" text-anchor="end">3000</text>
<text x="495.4" y="291" text-anchor="end">4000</text>
<text x="495.4" y="262" text-anchor="end">5000</text>
<text x="495.4" y="232" text-anchor="end">6000</text>
<text x="495.4" y="202" text-anchor="end">7000</text>
<text x="495.4" y="173" text-anchor="end">8000</text>
<text x="495.4" y="143" text-anchor="end">9000</text>
<text x="495.4" y="114" text-anchor="end">10000</text>
<text x="495.4" y="84" text-anchor="end">11000</text>
<text x="501.2" y="75.6">N</text>
<text x="930.5" y="437" text-anchor="end">km/hr</text>
<text x="935" y="321">150 kW</text>
<text x="935" y="351">100 kW</text>
<text x="935" y="380">50 kW</text>
<text x="935" y="404">10 kW</text>
</g>
<g font-family="Liberation Sans, sans-serif" font-size="14.67" fill="#3a3a3a">
<text x="717" y="439" text-anchor="middle">Vehicle speed</text>
<text transform="translate(437.6,242.2) rotate(-90)" text-anchor="middle">Longitudinal vehicle force (solid)</text>
<text transform="translate(453.6,242.2) rotate(-90)" text-anchor="middle">Force at constant power (dashed)</text>
</g>
<rect x="763.5" y="89.5" width="156" height="62" rx="1.5" fill="#fff" stroke="#1a1a1a" stroke-width="1"/>
<path d="M763.5,106.5 H919.5" stroke="#1a1a1a" stroke-width="1"/>
<g font-family="Liberation Sans, sans-serif" font-size="12" fill="#262626">
<text x="842" y="102.2" text-anchor="middle" font-weight="bold" fill="#1a1a1a" letter-spacing="-0.05">Road grade % (angle deg)</text>
<path d="M777.3,115.3 H817.5" stroke="#EDB120" stroke-width="2.67"/>
<text x="821.3" y="119.6">30 % (16.7 deg)</text>
<path d="M777.3,129.0 H817.5" stroke="#DD5400" stroke-width="2.67"/>
<text x="821.3" y="133.3">5 % (2.9 deg)</text>
<path d="M777.3,142.7 H817.5" stroke="#1171BE" stroke-width="2.67"/>
<text x="821.3" y="147.0">0 % (0 deg)</text>
</g>
<rect x="791.5" y="57.5" width="19" height="20" fill="#fafafa"/>
<g stroke="#646464" stroke-width="1" fill="none" stroke-linecap="round" stroke-linejoin="round">
<path d="M793.3,70.2 H804.6" stroke="#9a9a9a" stroke-width="1.8" stroke-linecap="butt"/>
<path d="M793.3,73.3 H805.6" stroke="#b5b5b5" stroke-width="1" stroke-linecap="butt"/>
<path d="M795.6,70.6 q-0.6,-2.6 1.4,-4.6 l3.6,-3.4 q1.600,-1.400 3,0 q1.400,1.400 0,3 l-3.600,3.400"/>
<path d="M808.7,71.2 V74.6 H805.3 Z" fill="#646464" stroke="none"/>
<path d="M821.4,60.5 h3.8 v5.800 h-3.800 z"/>
<path d="M819.9,66.4 h7.200 v3.600 h-7.200 z" stroke="#7a7a7a"/>
<path d="M819.9,68.2 h7.200" stroke="#9a9a9a"/>
<path d="M819.9,70 L813.8,75.3 H827.1 V70 Z" fill="#8a8a8a" fill-opacity="0.3" stroke="#7a7a7a"/>
<path d="M816.200,73.600 L813.8,75.3 H827.1 V72.200 Z" fill="#6a6a6a" stroke="none"/>
<path d="M835.3,60.5 h13.2 v14.800 h-13.200 v-5.600 l-1.800,-1.800 l1.800,-1.800 z M837.8,66.3 h8.300 M837.8,69.3 h8.300"/>
<path d="M857.8,75.3 L853.6,68.2 Q853.2,66.8 854.6,66.8 L856.4,68.4 V63 Q856.4,61.9 857.9,61.9 Q859.4,61.9 859.4,63 V61.2 Q859.4,60.1 861.2,60.1 Q862.9,60.1 862.9,61.2 V62.2 Q862.9,61.1 864.5,61.1 Q866,61.1 866,62.2 V64.3 Q866,63.3 867.4,63.3 Q868.7,63.3 868.7,64.5 L868.2,68 L866.5,75.3 Z M859.4,63 V66.6 M862.9,62.2 V66.6 M866,64.3 V66.6"/>
<circle cx="879.3" cy="66.3" r="5.9"/><path d="M875.8,66.3 h7 M879.3,62.800 v7"/><path d="M883.6,70.6 l4.800,4.800" stroke-width="1.5"/>
<circle cx="899.3" cy="66.3" r="5.9"/><path d="M895.8,66.300 h7"/><path d="M903.6,70.6 l4.800,4.800" stroke-width="1.5"/>
<path d="M913.4,68.200 L920.5,60.6 L928.600,68.200 M915.500,67 V75.300 H919 V70.200 H922.300 V75.300 H926.500 V67"/>
<path d="M924.800,61.400 h2.200 v2.400 z" fill="#646464" stroke="#646464" stroke-width="0.5"/>
</g>
</svg>
</body></html>
